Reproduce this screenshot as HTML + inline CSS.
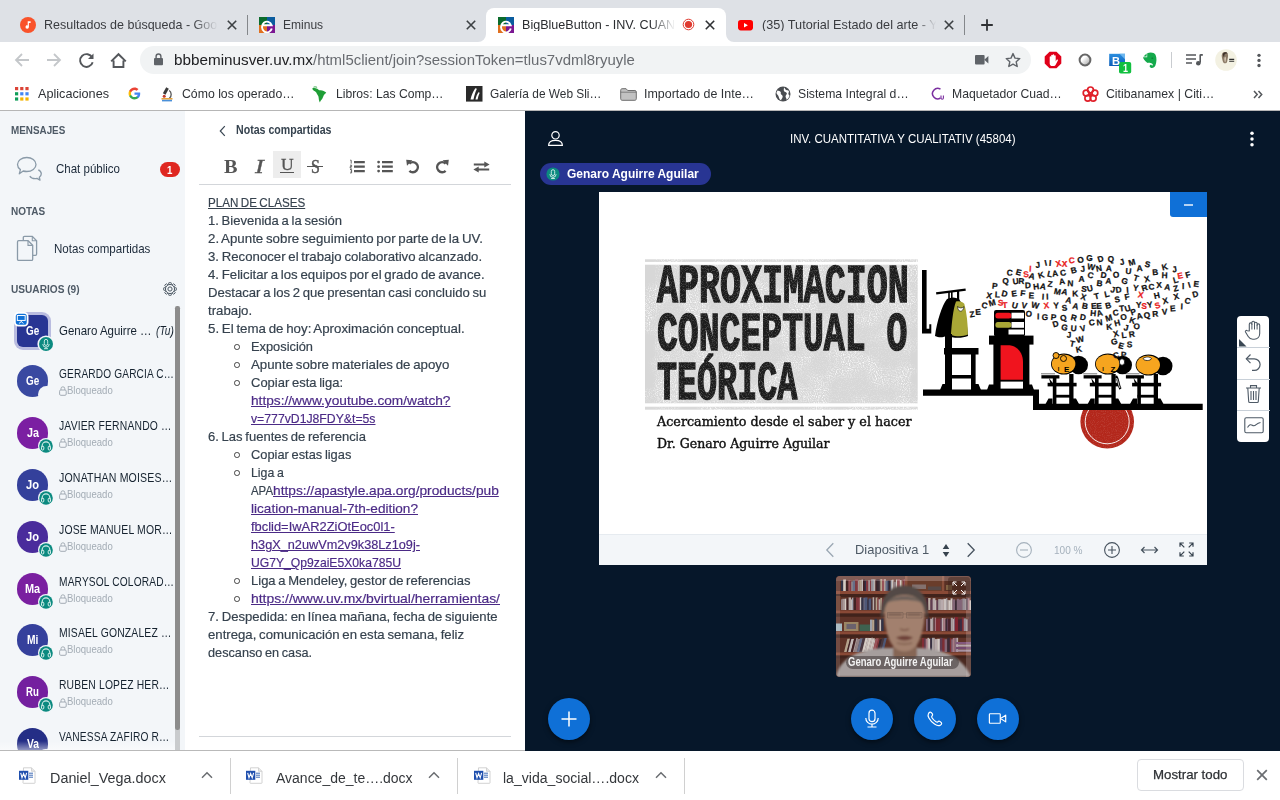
<!DOCTYPE html>
<html lang="es"><head><meta charset="utf-8"><title>BigBlueButton - INV. CUANTITATIVA Y CUALITATIV (45804)</title>
<style>
html,body{margin:0;padding:0}body{width:1280px;height:800px;overflow:hidden;position:relative;background:#fff;font-family:"Liberation Sans",sans-serif}
.a{position:absolute;display:block}
.t{position:absolute;white-space:pre;line-height:1;transform-origin:0 0;display:block}
</style></head>
<body>
<!-- browser chrome -->
<div class="a" style="left:0;top:0;width:1280px;height:42px;background:#dee1e6"></div>
<div class="a" style="left:486px;top:8px;width:240px;height:34px;background:#fff;border-radius:8px 8px 0 0"></div>
<svg class="a" style="left:478px;top:34px" width="8" height="8"><path d="M8 0V8H0A8 8 0 0 0 8 0Z" fill="#fff"/></svg>
<svg class="a" style="left:726px;top:34px" width="8" height="8"><path d="M0 0V8H8A8 8 0 0 1 0 0Z" fill="#fff"/></svg>
<svg class="a" style="left:20px;top:17px" width="16" height="16" viewBox="0 0 16 16"><circle cx="8" cy="8" r="8" fill="#f9532b"/><path d="M7.700 4.300h2.900v1.600H8.900v4.200a1.700 1.700 0 1 1-1.200-1.600z" fill="#fff"/></svg>
<span class="t" id="t0" style="left:44.30px;top:18.00px;font-size:13.20px;color:#3a3c40;transform:scaleX(0.9487);-webkit-mask-image:linear-gradient(90deg,#000 86%,transparent 100%);">Resultados de búsqueda - Goo</span>
<svg class="a" style="left:225.7px;top:18.6px" width="12" height="12" viewBox="-6 -6 12 12"><path d="M-4.2 -4.2L4.2 4.2M-4.2 4.2L4.2 -4.2" stroke="#3c4043" stroke-width="1.6" fill="none"/></svg>
<div class="a" style="left:247px;top:15px;width:1px;height:20px;background:#84878b"></div>
<svg class="a" style="left:258.8px;top:16.8px" width="16" height="16" viewBox="0 0 16 16"><rect x="0" y="0" width="8" height="8" fill="#0b6b2c"/><rect x="8" y="0" width="8" height="8" fill="#0b5c9e"/><rect x="0" y="8" width="8" height="8" fill="#e0701f"/><rect x="8" y="8" width="8" height="8" fill="#7b1792"/><path d="M12.800 11.600A5 5.400 0 1 1 12.700 8.200H3.400" fill="none" stroke="#fff" stroke-width="1.900"/></svg>
<span class="t" id="t1" style="left:283.20px;top:18.00px;font-size:13.20px;color:#3a3c40;transform:scaleX(0.9117);">Eminus</span>
<svg class="a" style="left:465.3px;top:18.6px" width="12" height="12" viewBox="-6 -6 12 12"><path d="M-4.2 -4.2L4.2 4.2M-4.2 4.2L4.2 -4.2" stroke="#3c4043" stroke-width="1.6" fill="none"/></svg>
<svg class="a" style="left:498.0px;top:16.8px" width="16" height="16" viewBox="0 0 16 16"><rect x="0" y="0" width="8" height="8" fill="#0b6b2c"/><rect x="8" y="0" width="8" height="8" fill="#0b5c9e"/><rect x="0" y="8" width="8" height="8" fill="#e0701f"/><rect x="8" y="8" width="8" height="8" fill="#7b1792"/><path d="M12.800 11.600A5 5.400 0 1 1 12.700 8.200H3.400" fill="none" stroke="#fff" stroke-width="1.900"/></svg>
<span class="t" id="t2" style="left:522.30px;top:18.00px;font-size:13.20px;color:#2b2d30;transform:scaleX(0.9528);-webkit-mask-image:linear-gradient(90deg,#000 84%,transparent 100%);">BigBlueButton - INV. CUAN</span>
<svg class="a" style="left:681.5px;top:18px" width="13" height="13" viewBox="-6.5 -6.5 13 13"><circle r="5.300" fill="none" stroke="#e03a2f" stroke-width="1"/><circle r="3.600" fill="#e03a2f"/></svg>
<svg class="a" style="left:704.3px;top:18.6px" width="12" height="12" viewBox="-6 -6 12 12"><path d="M-4.2 -4.2L4.2 4.2M-4.2 4.2L4.2 -4.2" stroke="#2f3134" stroke-width="1.6" fill="none"/></svg>
<svg class="a" style="left:737.5px;top:20px" width="15" height="11" viewBox="0 0 15 11"><rect width="15" height="10.4" rx="2.8" fill="#f00"/><path d="M6 2.9l3.9 2.3L6 7.5z" fill="#fff"/></svg>
<span class="t" id="t3" style="left:761.70px;top:18.00px;font-size:13.20px;color:#3a3c40;transform:scaleX(0.9606);-webkit-mask-image:linear-gradient(90deg,#000 88%,transparent 99%);">(35) Tutorial Estado del arte - Y</span>
<svg class="a" style="left:943.0px;top:18.6px" width="12" height="12" viewBox="-6 -6 12 12"><path d="M-4.2 -4.2L4.2 4.2M-4.2 4.2L4.2 -4.2" stroke="#3c4043" stroke-width="1.6" fill="none"/></svg>
<div class="a" style="left:964px;top:15px;width:1px;height:20px;background:#84878b"></div>
<svg class="a" style="left:980px;top:18px" width="14" height="14" viewBox="-7 -7 14 14"><path d="M-5.8 0H5.8M0 -5.8V5.8" stroke="#2f3134" stroke-width="1.8"/></svg>
<div class="a" style="left:0;top:42px;width:1280px;height:69px;background:#fff"></div>
<svg class="a" style="left:14px;top:52px" width="16" height="16" viewBox="0 0 16 16"><path d="M15 8H2M8 2L2 8l6 6" fill="none" stroke="#c4c7ca" stroke-width="1.8"/></svg>
<svg class="a" style="left:46px;top:52px" width="16" height="16" viewBox="0 0 16 16"><path d="M1 8h13M8 2l6 6-6 6" fill="none" stroke="#c4c7ca" stroke-width="1.8"/></svg>
<svg class="a" style="left:78px;top:52px" width="17" height="17" viewBox="0 0 16 16"><path d="M13.4 5.4A6 6 0 1 0 13.8 9.6" fill="none" stroke="#54575b" stroke-width="1.8"/><path d="M14.6 1.4v5.2H9.4z" fill="#54575b"/></svg>
<svg class="a" style="left:109.5px;top:51.5px" width="17" height="17" viewBox="0 0 17 17"><path d="M3.6 8.6V15h9.8V8.6M1.2 9.4L8.5 2.2l7.3 7.2" fill="none" stroke="#54575b" stroke-width="1.9"/></svg>
<div class="a" style="left:140px;top:46px;width:890.5px;height:28px;border-radius:14px;background:#f1f3f4"></div>
<svg class="a" style="left:153.5px;top:53px" width="9" height="13" viewBox="0 0 9 13"><rect x="0" y="5" width="9" height="7.3" rx="1" fill="#5f6368"/><path d="M2.1 5.4V3.4a2.4 2.4 0 0 1 4.8 0v2" fill="none" stroke="#5f6368" stroke-width="1.4"/></svg>
<span class="t" id="t4" style="left:174.00px;top:53.00px;font-size:14.60px;color:#202124;transform:scaleX(1.0455);">bbbeminusver.uv.mx</span>
<span class="t" id="t5" style="left:312.80px;top:53.00px;font-size:14.60px;color:#686b70;transform:scaleX(1.0241);">/html5client/join?sessionToken=tlus7vdml8ryuyle</span>
<svg class="a" style="left:974.5px;top:55px" width="14" height="10" viewBox="0 0 14 10"><rect width="9.6" height="9.4" rx="1" fill="#5f6368"/><path d="M9.2 4.7L13.4 1v7.6z" fill="#5f6368"/></svg>
<svg class="a" style="left:1005px;top:51.5px" width="16" height="16" viewBox="0 0 16 16"><path d="M8 1.6l2 4.5 4.8.5-3.6 3.2 1 4.7L8 12.1l-4.2 2.4 1-4.7L1.200 6.600l4.800-.5z" fill="none" stroke="#5f6368" stroke-width="1.4" stroke-linejoin="round"/></svg>
<svg class="a" style="left:1044px;top:51px" width="18" height="18" viewBox="-9 -9 18 18"><path d="M-3.500 -8.300h7L8.300 -3.500v7L3.500 8.300h-7L-8.300 3.500v-7z" fill="#e0001a"/><path d="M-3.300 1.200v-4.200a.75.750 0 0 1 1.500 0v-1.500a.75.750 0 0 1 1.500 0v-.5a.75.750 0 0 1 1.500 0v.9a.75.750 0 0 1 1.500 0V1.400l.9-1.700a.75.750 0 0 1 1.300.7L2.800 4.400c-.5 1.100-1.300 1.700-2.500 1.700h-.9c-1.500 0-2.700-1.200-2.700-2.700z" fill="#fff"/></svg>
<svg class="a" style="left:1077.300px;top:52px" width="16" height="16" viewBox="-8 -8 16 16"><defs><linearGradient id="gr1" x1="0" y1="0" x2="1" y2="1"><stop offset=".35" stop-color="#fff"/><stop offset="1" stop-color="#9a9a9a"/></linearGradient></defs><circle r="5.400" fill="url(#gr1)" stroke="#666" stroke-width="2"/></svg>
<svg class="a" style="left:1109px;top:51px" width="24" height="24" viewBox="0 0 24 24"><defs><linearGradient id="gr2" x1="0" y1="0" x2="0" y2="1"><stop offset="0" stop-color="#2c8fe0"/><stop offset="1" stop-color="#0b5cb8"/></linearGradient></defs><rect x=".2" y="2.800" width="15.800" height="12.200" fill="url(#gr2)"/><path d="M10.500 2.800H16v5.500z" fill="#6db6ee"/><rect x="10" y="11" width="12.200" height="11.600" rx="1.800" fill="#12c040"/></svg>
<span class="t" id="t6" style="left:1111.80px;top:56.00px;font-size:11.50px;color:#fff;font-weight:700;transform:scaleX(0.9624);">B</span>
<span class="t" id="t7" style="left:1122.80px;top:64.00px;font-size:10.20px;color:#fff;font-weight:700;transform:scaleX(0.8815);">1</span>
<svg class="a" style="left:1141.500px;top:51.500px" width="16" height="17" viewBox="0 0 16 17"><path d="M5.200 1.200C8.600 .1 12.200.5 13.500 2.800c1.400 2.900 1.200 7.600-.1 10.600-.7 1.600-2.200 2.700-3.900 2.500-1.700-.2-2.300-1.700-1.500-2.700.7-.8 2-.5 1.900.5.900-.1 1.200-1.100.6-1.800-1.300-1.600-4.300-.1-5.900-1.600C2.700 8.700 1.300 6.800 1 5.200h4.200z" fill="#14a94b"/><path d="M4.600 1.500v3H1.500z" fill="#14a94b"/><ellipse cx="10.300" cy="6.200" rx="1" ry=".6" fill="#0c7a35"/></svg>
<div class="a" style="left:1171px;top:52px;width:1px;height:16px;background:#c9ccd0"></div>
<svg class="a" style="left:1185px;top:52px" width="18" height="16" viewBox="0 0 18 16"><path d="M1 3h10M1 7h10M1 11h6" stroke="#54575b" stroke-width="1.700"/><path d="M15.200 2.500v8.300" stroke="#54575b" stroke-width="1.600"/><circle cx="13.300" cy="11.200" r="2.300" fill="#54575b"/><path d="M15.200 2h2.600v1.800h-2.600z" fill="#54575b"/></svg>
<svg class="a" style="left:1215px;top:49px" width="22" height="22" viewBox="-11 -11 22 22"><circle r="10.800" fill="#f3f1e2"/><path d="M-3.800 -6.500c1.600-2 4.800-1.800 5.600.4.700 2-.1 4-.3 5.800-.2 1.700-.5 3.300-2 3.600-1.500.2-2.400-.8-2.800-2.400-.5-2.300-1.700-5.500-.5-7.400z" fill="#8b7a66"/><path d="M-2.800 -6.800c1.500-1.300 3.700-1 4.300.3-1.300-.3-2.500.1-3 1-.5 1 .1 2.300-.2 3.400-.9-1.300-1.800-3.400-1.100-4.700z" fill="#3a2f28"/><path d="M-1.300 -3.500c.9.200 1.400 1 1.200 2.400-.2 1.500-.2 2.800-.9 3.600-.6-1.800-.9-4-.3-6z" fill="#d9cbb8"/><path d="M3.200 -0.600h5M3.200 1.200h5" stroke="#2b2b2b" stroke-width="1.100"/></svg>
<svg class="a" style="left:1255.500px;top:51px" width="6" height="18" viewBox="-3 -9 6 18"><circle cy="-4.700" r="1.650" fill="#54575b"/><circle cy=".4" r="1.650" fill="#54575b"/><circle cy="5.500" r="1.650" fill="#54575b"/></svg>
<svg class="a" style="left:14.5px;top:86.500px" width="14" height="14"><rect x="0.0" y="0.0" width="3.2" height="3.200" fill="#db4437"/><rect x="5.2" y="0.0" width="3.2" height="3.200" fill="#db4437"/><rect x="10.4" y="0.0" width="3.2" height="3.200" fill="#db4437"/><rect x="0.0" y="5.2" width="3.2" height="3.200" fill="#0f9d58"/><rect x="5.2" y="5.2" width="3.2" height="3.200" fill="#4285f4"/><rect x="10.4" y="5.2" width="3.2" height="3.200" fill="#4285f4"/><rect x="0.0" y="10.4" width="3.2" height="3.200" fill="#0f9d58"/><rect x="5.2" y="10.4" width="3.2" height="3.200" fill="#f4b400"/><rect x="10.4" y="10.4" width="3.2" height="3.200" fill="#f4b400"/></svg>
<span class="t" id="t8" style="left:38.30px;top:87.00px;font-size:13.10px;color:#2f3236;transform:scaleX(0.9658);">Aplicaciones</span>
<svg class="a" style="left:127.500px;top:87px" width="13" height="13" viewBox="0 0 48 48"><path fill="#4285f4" d="M45.100 24.500c0-1.600-.1-3.100-.4-4.500H24v8.500h11.800c-.5 2.800-2.100 5.100-4.400 6.700v5.500h7.100c4.200-3.800 6.600-9.500 6.600-16.200z"/><path fill="#34a853" d="M24 46c5.900 0 10.900-2 14.500-5.300l-7.100-5.500c-2 1.300-4.500 2.100-7.400 2.100-5.700 0-10.500-3.800-12.300-9H4.400v5.700C8 41.100 15.400 46 24 46z"/><path fill="#fbbc05" d="M11.700 28.300c-.4-1.300-.7-2.800-.7-4.300s.3-2.900.7-4.300V14H4.400C2.900 17 2 20.400 2 24s.9 7 2.400 10l7.300-5.700z"/><path fill="#ea4335" d="M24 10.700c3.200 0 6.100 1.100 8.400 3.300l6.300-6.300C34.900 4.200 29.900 2 24 2 15.400 2 8 6.900 4.400 14l7.300 5.700c1.800-5.200 6.600-9 12.300-9z"/></svg>
<svg class="a" style="left:159.500px;top:86px" width="14" height="16" viewBox="0 0 14 16"><path d="M6.200 1.200l2.600 1.500-3.300 6-2.600-1.500z" fill="#3b3b3b"/><path d="M9.200 4.500c2.400 1.600 2.800 5.600.2 7.800" fill="none" stroke="#555" stroke-width="1.300"/><path d="M1.500 12.800h11" stroke="#e8a33a" stroke-width="1.600"/><path d="M2 14.600h10" stroke="#4a90d9" stroke-width="1.600"/><circle cx="4.200" cy="10.300" r="1.500" fill="#c0392b"/></svg>
<span class="t" id="t9" style="left:182.00px;top:87.00px;font-size:13.10px;color:#2f3236;transform:scaleX(0.9368);">Cómo los operado…</span>
<svg class="a" style="left:311px;top:85.500px" width="17" height="17" viewBox="0 0 17 17"><path d="M1.200 2.500c1.500-.8 3.500-.5 5 .3.800.4 1.300 1.200 2.200 1.500 2.300-.6 5 .5 6.800 2.200-.6 1.200-1.800 1.600-2.400 2.800-.8 1.500-1 3.300-2.300 4.500-.9.800-1.300 1.700-1.600 2.700-1.200-1.700-1-3.800-1.400-5.700-.3-1.600-1.700-2.500-2.100-4-.3-1-1.300-1.400-2.100-1.800C2.400 4.600 1.500 3.700 1.200 2.500z" fill="#1f9e36"/><path d="M2.500 1.200c1.200-.5 2.600-.4 3.600.2" stroke="#1f9e36" stroke-width=".9" fill="none"/></svg>
<span class="t" id="t10" style="left:336.00px;top:87.00px;font-size:13.10px;color:#2f3236;transform:scaleX(0.9290);">Libros: Las Comp…</span>
<svg class="a" style="left:466px;top:86.400px" width="16.500" height="15.600" viewBox="0 0 16.500 15.600"><rect width="16.500" height="15.600" fill="#2a2a2a"/><path d="M4.500 13.500c1-4 2.300-7.600 4.800-11.200l1.600.5c-1.600 3.300-2.700 6.900-3.400 10.700zM9.500 13.500c.6-2.800 1.500-5 2.900-7.200l1.300.4c-1 2.200-1.700 4.400-2.100 6.800z" fill="#fff"/></svg>
<span class="t" id="t11" style="left:490.40px;top:87.00px;font-size:13.10px;color:#2f3236;transform:scaleX(0.9075);">Galería de Web Sli…</span>
<svg class="a" style="left:619.500px;top:87.500px" width="17" height="13" viewBox="0 0 17 13"><path d="M.7 2.200c0-.8.600-1.500 1.400-1.500h4l1.600 1.800h7.200c.8 0 1.400.600 1.400 1.400v6.900c0 .8-.6 1.500-1.400 1.500H2.100c-.8 0-1.400-.7-1.400-1.500z" fill="#c2c2c2" stroke="#6e6e6e" stroke-width="1"/><path d="M.7 4.200h15.600" stroke="#6e6e6e" stroke-width=".8"/></svg>
<span class="t" id="t12" style="left:644.00px;top:87.00px;font-size:13.10px;color:#2f3236;transform:scaleX(0.9505);">Importado de Inte…</span>
<svg class="a" style="left:774.500px;top:86px" width="16" height="16" viewBox="-8 -8 16 16"><circle r="7.500" fill="#4a4d51"/><path d="M-5.500 -3.500c1.200.6 2.200.4 3 1.300.9.900-.3 2 .7 2.700 1.100.8 1.900 1.600 1.300 3.100-.4 1-1.300 1.700-1.400 2.900-2.200-1-2-3.200-2.800-4.700-.6-1.200-2-1.800-1.800-3.300zM1 -6.500c1.400.8 1 2.100 2.200 2.600 1 .4 2-.2 2.600 1 .6 1.100-.8 1.900-.3 3.100.3.800 1 1 1.100 1.900C5.800 4 4.800 5.200 3.600 5.800c.2-1.800-1.400-2.300-1-3.900.3-1.300 1.600-1.500 1.200-2.700C3.400 -2 1.600 -1.800 1 -3c-.5-1 0-2.300 0-3.500z" fill="#fff"/></svg>
<span class="t" id="t13" style="left:798.30px;top:87.00px;font-size:13.10px;color:#2f3236;transform:scaleX(0.9323);">Sistema Integral d…</span>
<svg class="a" style="left:930px;top:86px" width="16" height="16" viewBox="0 0 16 16"><path d="M10.500 3.200A5.200 5.200 0 1 0 10.500 12" fill="none" stroke="#7b2fa0" stroke-width="1.500"/><path d="M11 9.500v2.600a1.200 1.200 0 0 0 2.400 0V9.500" fill="none" stroke="#7b2fa0" stroke-width="1.100"/></svg>
<span class="t" id="t14" style="left:952.30px;top:87.00px;font-size:13.10px;color:#2f3236;transform:scaleX(0.9303);">Maquetador Cuad…</span>
<svg class="a" style="left:1081.500px;top:85.500px" width="17" height="17" viewBox="-8.5 -8.500 17 17"><circle cx="-0.00" cy="-4.60" r="2.900" fill="none" stroke="#e0202a" stroke-width="1.700"/><circle cx="4.37" cy="-1.42" r="2.900" fill="none" stroke="#e0202a" stroke-width="1.700"/><circle cx="2.70" cy="3.72" r="2.900" fill="none" stroke="#e0202a" stroke-width="1.700"/><circle cx="-2.70" cy="3.72" r="2.900" fill="none" stroke="#e0202a" stroke-width="1.700"/><circle cx="-4.38" cy="-1.42" r="2.900" fill="none" stroke="#e0202a" stroke-width="1.700"/><circle r="1.600" fill="#e0202a"/></svg>
<span class="t" id="t15" style="left:1106.20px;top:87.00px;font-size:13.10px;color:#2f3236;transform:scaleX(0.9379);">Citibanamex | Citi…</span>
<svg class="a" style="left:1252.500px;top:89.500px" width="10" height="9" viewBox="0 0 10 9"><path d="M1 1l3.200 3.500L1 8M5.500 1l3.200 3.500L5.500 8" fill="none" stroke="#54575b" stroke-width="1.500"/></svg>
<div class="a" style="left:0;top:110px;width:1280px;height:1px;background:#b6b6b6"></div>
<!-- user list -->
<div class="a" style="left:0;top:111px;width:185px;height:640px;background:#f3f6f9"></div>
<span class="t" id="t16" style="left:11.00px;top:124.00px;font-size:11.60px;color:#4e5a66;font-weight:700;transform:scaleX(0.8511);">MENSAJES</span>
<svg class="a" style="left:16px;top:155px" width="28" height="27" viewBox="0 0 28 27"><path d="M10.800 2.500c5.100 0 9.200 3.100 9.200 7s-4.100 7-9.200 7c-1.300 0-2.500-.2-3.600-.5L3.300 18.800l1.100-4.200C2.600 13.300 1.500 11.500 1.500 9.500c0-3.900 4.200-7 9.300-7z" fill="none" stroke="#8a9aa8" stroke-width="1.300" stroke-linejoin="round"/><path d="M22.300 14.800c1.800.8 3 2.300 3 4 0 1.400-.8 2.600-2 3.400l.7 2.900-3-1.700c-.6.100-1.200.2-1.900.2-2.400 0-4.400-1-5.300-2.500" fill="none" stroke="#8a9aa8" stroke-width="1.300" stroke-linejoin="round"/></svg>
<span class="t" id="t17" style="left:56.30px;top:163.00px;font-size:12.80px;color:#1c2a3a;transform:scaleX(0.8996);">Chat público</span>
<div class="a" style="left:160px;top:162px;width:20px;height:15px;border-radius:7.500px;background:#df2721"></div>
<span class="t" id="t18" style="left:167.30px;top:165.00px;font-size:11.50px;color:#fff;font-weight:700;transform:scaleX(0.8429);">1</span>
<span class="t" id="t19" style="left:11.00px;top:205.00px;font-size:11.60px;color:#4e5a66;font-weight:700;transform:scaleX(0.8611);">NOTAS</span>
<svg class="a" style="left:16px;top:235px" width="23" height="27" viewBox="0 0 23 27"><path d="M7.300 5.700V2.600c0-.7.500-1.200 1.200-1.200h7.800l4.300 4.300v13.400c0 .7-.5 1.200-1.200 1.200h-2.600" fill="none" stroke="#8a9aa8" stroke-width="1.300"/><path d="M16.300 1.600v4.200h4.200" fill="none" stroke="#8a9aa8" stroke-width="1.100"/><path d="M2.700 5.700h9.400l4.600 4.600v13.900c0 .7-.5 1.200-1.200 1.200H2.700c-.7 0-1.200-.5-1.200-1.200V6.900c0-.7.500-1.200 1.200-1.200z" fill="#f3f6f9" stroke="#8a9aa8" stroke-width="1.300"/><path d="M12 5.900v4.500h4.500" fill="none" stroke="#8a9aa8" stroke-width="1.100"/></svg>
<span class="t" id="t20" style="left:53.80px;top:243.00px;font-size:12.80px;color:#1c2a3a;transform:scaleX(0.9036);">Notas compartidas</span>
<span class="t" id="t21" style="left:11.00px;top:283.00px;font-size:11.60px;color:#4e5a66;font-weight:700;transform:scaleX(0.8728);">USUARIOS (9)</span>
<svg class="a" style="left:162.900px;top:282px" width="14" height="14" viewBox="-8 -8 16 16"><rect x="-1.500" y="-7.300" width="3" height="2.600" rx=".6" transform="rotate(0)" fill="none" stroke="#46525e" stroke-width="1"/><rect x="-1.500" y="-7.300" width="3" height="2.600" rx=".6" transform="rotate(45)" fill="none" stroke="#46525e" stroke-width="1"/><rect x="-1.500" y="-7.300" width="3" height="2.600" rx=".6" transform="rotate(90)" fill="none" stroke="#46525e" stroke-width="1"/><rect x="-1.500" y="-7.300" width="3" height="2.600" rx=".6" transform="rotate(135)" fill="none" stroke="#46525e" stroke-width="1"/><rect x="-1.500" y="-7.300" width="3" height="2.600" rx=".6" transform="rotate(180)" fill="none" stroke="#46525e" stroke-width="1"/><rect x="-1.500" y="-7.300" width="3" height="2.600" rx=".6" transform="rotate(225)" fill="none" stroke="#46525e" stroke-width="1"/><rect x="-1.500" y="-7.300" width="3" height="2.600" rx=".6" transform="rotate(270)" fill="none" stroke="#46525e" stroke-width="1"/><rect x="-1.500" y="-7.300" width="3" height="2.600" rx=".6" transform="rotate(315)" fill="none" stroke="#46525e" stroke-width="1"/><circle r="5.200" fill="#f3f6f9" stroke="#46525e" stroke-width="1.100"/><circle r="2.400" fill="none" stroke="#46525e" stroke-width="1.100"/></svg>
<div class="a" style="left:14px;top:312.0px;width:37px;height:38px;border-radius:9px;background:#b9bce0"></div>
<div class="a" style="left:17px;top:315.0px;width:31px;height:32px;border-radius:6px;background:#283593"></div>
<span class="t" id="t22" style="left:26.00px;top:325.00px;font-size:12.00px;color:#fff;font-weight:700;transform:scaleX(0.8242);">Ge</span>
<svg class="a" style="left:14.400px;top:312.1px" width="14.500" height="14.500" viewBox="-.4 -.4 14.800 14.800"><rect x=".5" y=".5" width="13" height="13" rx="3.500" fill="#0f70d7" stroke="#fff" stroke-width="1.800"/><rect x="3" y="3.200" width="8" height="5" fill="none" stroke="#fff" stroke-width="1"/><path d="M7 8.300v1.300M4.700 11.300L7 9.500l2.300 1.800" fill="none" stroke="#fff" stroke-width=".9"/></svg>
<svg class="a" style="left:37px;top:334.5px" width="18" height="18" viewBox="-9 -9 18 18"><circle r="8.600" fill="#f3f6f9"/><circle r="7" fill="#0b8a80"/><rect x="-1.700" y="-4.600" width="3.400" height="6" rx="1.700" fill="none" stroke="#d8f0ec" stroke-width=".9"/><path d="M-3.200 0a3.200 3.200 0 0 0 6.400 0M0 3.200v1.300M-2 4.700h4" fill="none" stroke="#d8f0ec" stroke-width=".9"/></svg>
<span class="t" id="t23" style="left:59.20px;top:325.00px;font-size:12.80px;color:#15222f;transform:scaleX(0.8978);">Genaro Aguirre …</span>
<span class="t" id="t24" style="left:156.30px;top:325.00px;font-size:12.20px;color:#15222f;font-style:italic;transform:scaleX(0.8350);">(Tu)</span>
<div class="a" style="left:16.800px;top:365.0px;width:31.400px;height:32px;border-radius:16px;background:#3949a1"></div>
<span class="t" id="t25" style="left:25.90px;top:375.00px;font-size:12.00px;color:#fff;font-weight:700;transform:scaleX(0.8242);">Ge</span>
<div class="a" style="left:38px;top:386.0px;width:17px;height:17px;border-radius:9px;background:#f3f6f9"></div>
<span class="t" id="t26" style="left:59.20px;top:368.00px;font-size:12.40px;color:#15222f;letter-spacing:0.20px;transform:scaleX(0.8157);">GERARDO GARCIA C…</span>
<svg class="a" style="left:59.0px;top:386.3px" width="8" height="10" viewBox="0 0 8 10"><rect x=".6" y="4" width="6.600" height="5.300" rx="1.200" fill="none" stroke="#a3acb5" stroke-width="1"/><path d="M2 4V2.700a1.900 1.900 0 0 1 3.800 0V4" fill="none" stroke="#a3acb5" stroke-width="1"/></svg>
<span class="t" id="t27" style="left:67.30px;top:385.00px;font-size:10.80px;color:#a3acb5;transform:scaleX(0.8850);">Bloqueado</span>
<div class="a" style="left:16.800px;top:417.0px;width:31.400px;height:32px;border-radius:16px;background:#7b1fa2"></div>
<span class="t" id="t28" style="left:26.50px;top:427.00px;font-size:12.00px;color:#fff;font-weight:700;transform:scaleX(0.8982);">Ja</span>
<svg class="a" style="left:37.4px;top:437.0px" width="18" height="18" viewBox="-9 -9 18 18"><circle r="8" fill="#f3f6f9"/><circle r="6.800" fill="#0b8a80"/><path d="M-3.900 1.200v-1.400a3.900 3.900 0 0 1 7.800 0v1.400" fill="none" stroke="#d8f0ec" stroke-width="1.100"/><rect x="-4.500" y="0.200" width="2.300" height="3.800" rx="1" fill="none" stroke="#d8f0ec" stroke-width="1"/><rect x="2.200" y="0.200" width="2.300" height="3.800" rx="1" fill="none" stroke="#d8f0ec" stroke-width="1"/></svg>
<span class="t" id="t29" style="left:59.20px;top:420.00px;font-size:12.40px;color:#15222f;letter-spacing:0.20px;transform:scaleX(0.8361);">JAVIER FERNANDO …</span>
<svg class="a" style="left:59.0px;top:438.3px" width="8" height="10" viewBox="0 0 8 10"><rect x=".6" y="4" width="6.600" height="5.300" rx="1.200" fill="none" stroke="#a3acb5" stroke-width="1"/><path d="M2 4V2.700a1.900 1.900 0 0 1 3.800 0V4" fill="none" stroke="#a3acb5" stroke-width="1"/></svg>
<span class="t" id="t30" style="left:67.30px;top:437.00px;font-size:10.80px;color:#a3acb5;transform:scaleX(0.8850);">Bloqueado</span>
<div class="a" style="left:16.800px;top:469.0px;width:31.400px;height:32px;border-radius:16px;background:#34409b"></div>
<span class="t" id="t31" style="left:26.00px;top:479.00px;font-size:12.00px;color:#fff;font-weight:700;transform:scaleX(0.9275);">Jo</span>
<svg class="a" style="left:37.4px;top:489.0px" width="18" height="18" viewBox="-9 -9 18 18"><circle r="8" fill="#f3f6f9"/><circle r="6.800" fill="#0b8a80"/><path d="M-3.900 1.200v-1.400a3.900 3.900 0 0 1 7.800 0v1.400" fill="none" stroke="#d8f0ec" stroke-width="1.100"/><rect x="-4.500" y="0.200" width="2.300" height="3.800" rx="1" fill="none" stroke="#d8f0ec" stroke-width="1"/><rect x="2.200" y="0.200" width="2.300" height="3.800" rx="1" fill="none" stroke="#d8f0ec" stroke-width="1"/></svg>
<span class="t" id="t32" style="left:59.20px;top:472.00px;font-size:12.40px;color:#15222f;letter-spacing:0.20px;transform:scaleX(0.8528);">JONATHAN MOISES…</span>
<svg class="a" style="left:59.0px;top:490.3px" width="8" height="10" viewBox="0 0 8 10"><rect x=".6" y="4" width="6.600" height="5.300" rx="1.200" fill="none" stroke="#a3acb5" stroke-width="1"/><path d="M2 4V2.700a1.900 1.900 0 0 1 3.800 0V4" fill="none" stroke="#a3acb5" stroke-width="1"/></svg>
<span class="t" id="t33" style="left:67.30px;top:489.00px;font-size:10.80px;color:#a3acb5;transform:scaleX(0.8850);">Bloqueado</span>
<div class="a" style="left:16.800px;top:521.0px;width:31.400px;height:32px;border-radius:16px;background:#4a2c9c"></div>
<span class="t" id="t34" style="left:26.00px;top:531.00px;font-size:12.00px;color:#fff;font-weight:700;transform:scaleX(0.9275);">Jo</span>
<svg class="a" style="left:37.4px;top:541.0px" width="18" height="18" viewBox="-9 -9 18 18"><circle r="8" fill="#f3f6f9"/><circle r="6.800" fill="#0b8a80"/><path d="M-3.900 1.200v-1.400a3.900 3.900 0 0 1 7.800 0v1.400" fill="none" stroke="#d8f0ec" stroke-width="1.100"/><rect x="-4.500" y="0.200" width="2.300" height="3.800" rx="1" fill="none" stroke="#d8f0ec" stroke-width="1"/><rect x="2.200" y="0.200" width="2.300" height="3.800" rx="1" fill="none" stroke="#d8f0ec" stroke-width="1"/></svg>
<span class="t" id="t35" style="left:59.20px;top:524.00px;font-size:12.40px;color:#15222f;letter-spacing:0.20px;transform:scaleX(0.8411);">JOSE MANUEL MOR…</span>
<svg class="a" style="left:59.0px;top:542.3px" width="8" height="10" viewBox="0 0 8 10"><rect x=".6" y="4" width="6.600" height="5.300" rx="1.200" fill="none" stroke="#a3acb5" stroke-width="1"/><path d="M2 4V2.700a1.900 1.900 0 0 1 3.800 0V4" fill="none" stroke="#a3acb5" stroke-width="1"/></svg>
<span class="t" id="t36" style="left:67.30px;top:541.00px;font-size:10.80px;color:#a3acb5;transform:scaleX(0.8850);">Bloqueado</span>
<div class="a" style="left:16.800px;top:573.0px;width:31.400px;height:32px;border-radius:16px;background:#7a1fa0"></div>
<span class="t" id="t37" style="left:24.90px;top:583.00px;font-size:12.00px;color:#fff;font-weight:700;transform:scaleX(0.9117);">Ma</span>
<svg class="a" style="left:37.4px;top:593.0px" width="18" height="18" viewBox="-9 -9 18 18"><circle r="8" fill="#f3f6f9"/><circle r="6.800" fill="#0b8a80"/><path d="M-3.900 1.200v-1.400a3.900 3.900 0 0 1 7.800 0v1.400" fill="none" stroke="#d8f0ec" stroke-width="1.100"/><rect x="-4.500" y="0.200" width="2.300" height="3.800" rx="1" fill="none" stroke="#d8f0ec" stroke-width="1"/><rect x="2.200" y="0.200" width="2.300" height="3.800" rx="1" fill="none" stroke="#d8f0ec" stroke-width="1"/></svg>
<span class="t" id="t38" style="left:59.20px;top:576.00px;font-size:12.40px;color:#15222f;letter-spacing:0.20px;transform:scaleX(0.8201);">MARYSOL COLORAD…</span>
<svg class="a" style="left:59.0px;top:594.3px" width="8" height="10" viewBox="0 0 8 10"><rect x=".6" y="4" width="6.600" height="5.300" rx="1.200" fill="none" stroke="#a3acb5" stroke-width="1"/><path d="M2 4V2.700a1.900 1.900 0 0 1 3.800 0V4" fill="none" stroke="#a3acb5" stroke-width="1"/></svg>
<span class="t" id="t39" style="left:67.30px;top:593.00px;font-size:10.80px;color:#a3acb5;transform:scaleX(0.8850);">Bloqueado</span>
<div class="a" style="left:16.800px;top:624.2px;width:31.400px;height:32px;border-radius:16px;background:#35409c"></div>
<span class="t" id="t40" style="left:26.80px;top:634.00px;font-size:12.00px;color:#fff;font-weight:700;transform:scaleX(0.8543);">Mi</span>
<svg class="a" style="left:37.4px;top:644.2px" width="18" height="18" viewBox="-9 -9 18 18"><circle r="8" fill="#f3f6f9"/><circle r="6.800" fill="#0b8a80"/><path d="M-3.900 1.200v-1.400a3.900 3.900 0 0 1 7.800 0v1.400" fill="none" stroke="#d8f0ec" stroke-width="1.100"/><rect x="-4.500" y="0.200" width="2.300" height="3.800" rx="1" fill="none" stroke="#d8f0ec" stroke-width="1"/><rect x="2.200" y="0.200" width="2.300" height="3.800" rx="1" fill="none" stroke="#d8f0ec" stroke-width="1"/></svg>
<span class="t" id="t41" style="left:59.20px;top:627.00px;font-size:12.40px;color:#15222f;letter-spacing:0.20px;transform:scaleX(0.8367);">MISAEL GONZALEZ …</span>
<svg class="a" style="left:59.0px;top:645.5px" width="8" height="10" viewBox="0 0 8 10"><rect x=".6" y="4" width="6.600" height="5.300" rx="1.200" fill="none" stroke="#a3acb5" stroke-width="1"/><path d="M2 4V2.700a1.900 1.900 0 0 1 3.800 0V4" fill="none" stroke="#a3acb5" stroke-width="1"/></svg>
<span class="t" id="t42" style="left:67.30px;top:644.00px;font-size:10.80px;color:#a3acb5;transform:scaleX(0.8850);">Bloqueado</span>
<div class="a" style="left:16.800px;top:676.2px;width:31.400px;height:32px;border-radius:16px;background:#74209f"></div>
<span class="t" id="t43" style="left:26.10px;top:686.00px;font-size:12.00px;color:#fff;font-weight:700;transform:scaleX(0.8000);">Ru</span>
<svg class="a" style="left:37.4px;top:696.2px" width="18" height="18" viewBox="-9 -9 18 18"><circle r="8" fill="#f3f6f9"/><circle r="6.800" fill="#0b8a80"/><path d="M-3.900 1.200v-1.400a3.900 3.900 0 0 1 7.800 0v1.400" fill="none" stroke="#d8f0ec" stroke-width="1.100"/><rect x="-4.500" y="0.200" width="2.300" height="3.800" rx="1" fill="none" stroke="#d8f0ec" stroke-width="1"/><rect x="2.200" y="0.200" width="2.300" height="3.800" rx="1" fill="none" stroke="#d8f0ec" stroke-width="1"/></svg>
<span class="t" id="t44" style="left:59.20px;top:679.00px;font-size:12.40px;color:#15222f;letter-spacing:0.20px;transform:scaleX(0.8331);">RUBEN LOPEZ HER…</span>
<svg class="a" style="left:59.0px;top:697.5px" width="8" height="10" viewBox="0 0 8 10"><rect x=".6" y="4" width="6.600" height="5.300" rx="1.200" fill="none" stroke="#a3acb5" stroke-width="1"/><path d="M2 4V2.700a1.900 1.900 0 0 1 3.800 0V4" fill="none" stroke="#a3acb5" stroke-width="1"/></svg>
<span class="t" id="t45" style="left:67.30px;top:696.00px;font-size:10.80px;color:#a3acb5;transform:scaleX(0.8850);">Bloqueado</span>
<div class="a" style="left:16.800px;top:728.2px;width:31.400px;height:32px;border-radius:16px;background:#242e86"></div>
<span class="t" id="t46" style="left:26.50px;top:738.00px;font-size:12.00px;color:#fff;font-weight:700;transform:scaleX(0.8562);">Va</span>
<svg class="a" style="left:37.4px;top:748.2px" width="18" height="18" viewBox="-9 -9 18 18"><circle r="8" fill="#f3f6f9"/><circle r="6.800" fill="#0b8a80"/><path d="M-3.900 1.200v-1.400a3.900 3.900 0 0 1 7.800 0v1.400" fill="none" stroke="#d8f0ec" stroke-width="1.100"/><rect x="-4.500" y="0.200" width="2.300" height="3.800" rx="1" fill="none" stroke="#d8f0ec" stroke-width="1"/><rect x="2.200" y="0.200" width="2.300" height="3.800" rx="1" fill="none" stroke="#d8f0ec" stroke-width="1"/></svg>
<span class="t" id="t47" style="left:59.20px;top:731.00px;font-size:12.40px;color:#15222f;letter-spacing:0.20px;transform:scaleX(0.8247);">VANESSA ZAFIRO R…</span>
<svg class="a" style="left:59.0px;top:749.5px" width="8" height="10" viewBox="0 0 8 10"><rect x=".6" y="4" width="6.600" height="5.300" rx="1.200" fill="none" stroke="#a3acb5" stroke-width="1"/><path d="M2 4V2.700a1.900 1.900 0 0 1 3.800 0V4" fill="none" stroke="#a3acb5" stroke-width="1"/></svg>
<div class="a" style="left:175.300px;top:306px;width:4.600px;height:445px;background:#c9cbcd;border-radius:2.300px 2.300px 0 0"></div>
<div class="a" style="left:175.300px;top:306px;width:4.600px;height:424px;background:#8c8c8c;border-radius:2.300px"></div>
<div class="a" style="left:0;top:741px;width:175px;height:10px;background:linear-gradient(180deg,rgba(243,246,249,0),rgba(255,255,255,.55))"></div>
<!-- shared notes -->
<div class="a" style="left:185px;top:111px;width:340px;height:640px;background:#fff"></div>
<svg class="a" style="left:218px;top:125px" width="9" height="12" viewBox="0 0 9 12"><path d="M6.800 1.200L2.300 6l4.500 4.800" fill="none" stroke="#3a4753" stroke-width="1.200"/></svg>
<span class="t" id="t48" style="left:235.50px;top:124.00px;font-size:12.40px;color:#36434f;font-weight:700;transform:scaleX(0.8561);">Notas compartidas</span>
<div class="a" style="left:273px;top:151px;width:28px;height:27px;background:#ededed"></div>
<span class="t" id="t49" style="left:223.80px;top:157.00px;font-size:19.50px;color:#555;font-weight:700;font-family:'Liberation Serif', serif;transform:scaleX(1.0372);">B</span>
<span class="t" id="t50" style="left:254.50px;top:157.00px;font-size:19.50px;color:#555;font-style:italic;font-family:'Liberation Serif', serif;transform:scaleX(1.3538);-webkit-text-stroke:.3px #555;">I</span>
<span class="t" id="t51" style="left:280.80px;top:157.00px;font-size:16.20px;color:#555;font-family:'Liberation Serif', serif;transform:scaleX(1.0852);-webkit-text-stroke:.3px #555;">U</span>
<div class="a" style="left:280.200px;top:171.700px;width:13.800px;height:1.300px;background:#555"></div>
<span class="t" id="t52" style="left:310.60px;top:157.00px;font-size:19.50px;color:#555;font-family:'Liberation Serif', serif;transform:scaleX(0.8196);-webkit-text-stroke:.5px #555;">S</span>
<div class="a" style="left:307.300px;top:166.100px;width:15.500px;height:1.300px;background:#555"></div>
<svg class="a" style="left:348px;top:158px" width="18" height="17" viewBox="0 0 18 17"><path d="M6 4.100h10.800M6 8.700h10.800M6 13.100h10.800" stroke="#555" stroke-width="2.200"/><path d="M2.200 2.200h1v3.400M2 7.200h1.600v1.400H2.200v1.500h1.600M2 11.500h1.600v3.400H2M2.600 13.200h1" fill="none" stroke="#555" stroke-width=".9"/></svg>
<svg class="a" style="left:376px;top:158px" width="18" height="17" viewBox="0 0 18 17"><path d="M6 4.100h10.800M6 8.700h10.800M6 13.100h10.800" stroke="#555" stroke-width="2.200"/><circle cx="2.600" cy="4.100" r="1.400" fill="#555"/><circle cx="2.600" cy="8.700" r="1.400" fill="#555"/><circle cx="2.600" cy="13.100" r="1.400" fill="#555"/></svg>
<svg class="a" style="left:405px;top:158px" width="17" height="17" viewBox="0 0 17 17"><path d="M4.300 5.600A5 5 0 1 1 4.400 12.800" fill="none" stroke="#555" stroke-width="2.500"/><path d="M1.200 1.800l6.200.5-5.400 5.500z" fill="#555"/></svg>
<svg class="a" style="left:433px;top:158px" width="17" height="17" viewBox="0 0 17 17"><path d="M12.700 5.600A5 5 0 1 0 12.600 12.800" fill="none" stroke="#555" stroke-width="2.500"/><path d="M15.800 1.800l-6.200.5 5.400 5.500z" fill="#555"/></svg>
<svg class="a" style="left:471.500px;top:158px" width="19" height="17" viewBox="0 0 19 17"><path d="M1.800 6.500h11.500M5.500 11.500h11.700" stroke="#555" stroke-width="2.100"/><path d="M12.300 3.600l5.300 2.900-5.300 2.900zM6.700 8.600l-5.300 2.900 5.300 2.900z" fill="#555"/></svg>
<div class="a" style="left:199px;top:184px;width:312px;height:1px;background:#d3d6da"></div>
<div class="a" style="left:199px;top:735.500px;width:312px;height:1px;background:#d3d6da"></div>
<span class="t" id="t53" style="left:208.40px;top:197.00px;font-size:12.70px;color:#36424e;text-decoration:underline;transform:scaleX(0.9162);word-spacing:-.9px;-webkit-text-stroke:.18px currentColor;">PLAN DE CLASES</span>
<span class="t" id="t54" style="left:208.40px;top:215.00px;font-size:12.70px;color:#36424e;transform:scaleX(1.0282);word-spacing:-.9px;-webkit-text-stroke:.18px currentColor;">1. Bievenida a la sesión</span>
<span class="t" id="t55" style="left:208.40px;top:233.00px;font-size:12.70px;color:#36424e;transform:scaleX(1.0473);word-spacing:-.9px;-webkit-text-stroke:.18px currentColor;">2. Apunte sobre seguimiento por parte de la UV.</span>
<span class="t" id="t56" style="left:208.40px;top:251.00px;font-size:12.70px;color:#36424e;transform:scaleX(1.0402);word-spacing:-.9px;-webkit-text-stroke:.18px currentColor;">3. Reconocer el trabajo colaborativo alcanzado.</span>
<span class="t" id="t57" style="left:208.40px;top:269.00px;font-size:12.70px;color:#36424e;transform:scaleX(1.0416);word-spacing:-.9px;-webkit-text-stroke:.18px currentColor;">4. Felicitar a los equipos por el grado de avance.</span>
<span class="t" id="t58" style="left:208.40px;top:287.00px;font-size:12.70px;color:#36424e;transform:scaleX(1.0339);word-spacing:-.9px;-webkit-text-stroke:.18px currentColor;">Destacar a los 2 que presentan casi concluido su</span>
<span class="t" id="t59" style="left:208.40px;top:305.00px;font-size:12.70px;color:#36424e;transform:scaleX(1.0419);word-spacing:-.9px;-webkit-text-stroke:.18px currentColor;">trabajo.</span>
<span class="t" id="t60" style="left:208.40px;top:323.00px;font-size:12.70px;color:#36424e;transform:scaleX(1.0475);word-spacing:-.9px;-webkit-text-stroke:.18px currentColor;">5. El tema de hoy: Aproximación conceptual.</span>
<span class="t" id="t61" style="left:250.50px;top:341.00px;font-size:12.70px;color:#36424e;transform:scaleX(1.0104);word-spacing:-.9px;-webkit-text-stroke:.18px currentColor;">Exposición</span>
<div class="a" style="left:234px;top:344.3px;width:3.600px;height:3.600px;border:1px solid #444;border-radius:50%"></div>
<span class="t" id="t62" style="left:250.50px;top:359.00px;font-size:12.70px;color:#36424e;transform:scaleX(1.0456);word-spacing:-.9px;-webkit-text-stroke:.18px currentColor;">Apunte sobre materiales de apoyo</span>
<div class="a" style="left:234px;top:362.3px;width:3.600px;height:3.600px;border:1px solid #444;border-radius:50%"></div>
<span class="t" id="t63" style="left:250.50px;top:377.00px;font-size:12.70px;color:#36424e;transform:scaleX(1.0235);word-spacing:-.9px;-webkit-text-stroke:.18px currentColor;">Copiar esta liga:</span>
<div class="a" style="left:234px;top:380.3px;width:3.600px;height:3.600px;border:1px solid #444;border-radius:50%"></div>
<span class="t" id="t64" style="left:250.50px;top:395.00px;font-size:12.70px;color:#4b2a86;text-decoration:underline;transform:scaleX(1.0797);word-spacing:-.9px;-webkit-text-stroke:.18px currentColor;">https://www.youtube.com/watch?</span>
<span class="t" id="t65" style="left:250.50px;top:413.00px;font-size:12.70px;color:#4b2a86;text-decoration:underline;transform:scaleX(0.9646);word-spacing:-.9px;-webkit-text-stroke:.18px currentColor;">v=777vD1J8FDY&amp;t=5s</span>
<span class="t" id="t66" style="left:208.40px;top:431.00px;font-size:12.70px;color:#36424e;transform:scaleX(1.0274);word-spacing:-.9px;-webkit-text-stroke:.18px currentColor;">6. Las fuentes de referencia</span>
<span class="t" id="t67" style="left:250.50px;top:449.00px;font-size:12.70px;color:#36424e;transform:scaleX(1.0127);word-spacing:-.9px;-webkit-text-stroke:.18px currentColor;">Copiar estas ligas</span>
<div class="a" style="left:234px;top:452.3px;width:3.600px;height:3.600px;border:1px solid #444;border-radius:50%"></div>
<span class="t" id="t68" style="left:250.50px;top:467.00px;font-size:12.70px;color:#36424e;transform:scaleX(0.9741);word-spacing:-.9px;-webkit-text-stroke:.18px currentColor;">Liga a</span>
<div class="a" style="left:234px;top:470.3px;width:3.600px;height:3.600px;border:1px solid #444;border-radius:50%"></div>
<span class="t" id="t69" style="left:250.50px;top:485.00px;font-size:12.70px;color:#36424e;transform:scaleX(0.8997);word-spacing:-.9px;-webkit-text-stroke:.18px currentColor;">APA</span>
<span class="t" id="t70" style="left:272.50px;top:485.00px;font-size:12.70px;color:#4b2a86;text-decoration:underline;transform:scaleX(1.0815);word-spacing:-.9px;-webkit-text-stroke:.18px currentColor;">https://apastyle.apa.org/products/pub</span>
<span class="t" id="t71" style="left:250.50px;top:503.00px;font-size:12.70px;color:#4b2a86;text-decoration:underline;transform:scaleX(1.0714);word-spacing:-.9px;-webkit-text-stroke:.18px currentColor;">lication-manual-7th-edition?</span>
<span class="t" id="t72" style="left:250.50px;top:521.00px;font-size:12.70px;color:#4b2a86;text-decoration:underline;transform:scaleX(1.0170);word-spacing:-.9px;-webkit-text-stroke:.18px currentColor;">fbclid=IwAR2ZiOtEoc0l1-</span>
<span class="t" id="t73" style="left:250.50px;top:539.00px;font-size:12.70px;color:#4b2a86;text-decoration:underline;transform:scaleX(1.0025);word-spacing:-.9px;-webkit-text-stroke:.18px currentColor;">h3gX_n2uwVm2v9k38Lz1o9j-</span>
<span class="t" id="t74" style="left:250.50px;top:557.00px;font-size:12.70px;color:#4b2a86;text-decoration:underline;transform:scaleX(0.9580);word-spacing:-.9px;-webkit-text-stroke:.18px currentColor;">UG7Y_Qp9zaiE5X0ka785U</span>
<span class="t" id="t75" style="left:250.50px;top:575.00px;font-size:12.70px;color:#36424e;transform:scaleX(1.0262);word-spacing:-.9px;-webkit-text-stroke:.18px currentColor;">Liga a Mendeley, gestor de referencias</span>
<div class="a" style="left:234px;top:578.3px;width:3.600px;height:3.600px;border:1px solid #444;border-radius:50%"></div>
<span class="t" id="t76" style="left:250.50px;top:593.00px;font-size:12.70px;color:#4b2a86;text-decoration:underline;transform:scaleX(1.0978);word-spacing:-.9px;-webkit-text-stroke:.18px currentColor;">https://www.uv.mx/bvirtual/herramientas/</span>
<div class="a" style="left:234px;top:596.3px;width:3.600px;height:3.600px;border:1px solid #444;border-radius:50%"></div>
<span class="t" id="t77" style="left:208.40px;top:611.00px;font-size:12.70px;color:#36424e;transform:scaleX(1.0339);word-spacing:-.9px;-webkit-text-stroke:.18px currentColor;">7. Despedida: en línea mañana, fecha de siguiente</span>
<span class="t" id="t78" style="left:208.40px;top:629.00px;font-size:12.70px;color:#36424e;transform:scaleX(1.0386);word-spacing:-.9px;-webkit-text-stroke:.18px currentColor;">entrega, comunicación en esta semana, feliz</span>
<span class="t" id="t79" style="left:208.40px;top:647.00px;font-size:12.70px;color:#36424e;transform:scaleX(1.0010);word-spacing:-.9px;-webkit-text-stroke:.18px currentColor;">descanso en casa.</span>
<!-- presentation -->
<div class="a" style="left:525px;top:111px;width:755px;height:640px;background:#06172a"></div>
<svg class="a" style="left:546.500px;top:130px" width="17" height="17" viewBox="0 0 17 17"><circle cx="8.500" cy="5.300" r="3.700" fill="none" stroke="#fff" stroke-width="1.200"/><path d="M1.600 15.400c0-3.300 2.700-5 6.900-5s6.900 1.700 6.900 5z" fill="none" stroke="#fff" stroke-width="1.200" stroke-linejoin="round"/></svg>
<span class="t" id="t80" style="left:790.30px;top:133.00px;font-size:12.70px;color:#fff;transform:scaleX(0.9060);">INV. CUANTITATIVA Y CUALITATIV (45804)</span>
<svg class="a" style="left:1248.500px;top:130px" width="6" height="18" viewBox="-3 -9 6 18"><circle cy="-5.700" r="1.750" fill="#fff"/><circle r="1.750" fill="#fff"/><circle cy="5.700" r="1.750" fill="#fff"/></svg>
<div class="a" style="left:540px;top:163px;width:171px;height:22px;border-radius:11px;background:#283593"></div>
<svg class="a" style="left:546px;top:167px" width="14" height="14" viewBox="-7 -7 14 14"><circle r="6.600" fill="#0b8a80"/><rect x="-1.700" y="-4.300" width="3.400" height="5.800" rx="1.700" fill="none" stroke="#d8f0ec" stroke-width=".9"/><path d="M-3.100 .2a3.100 3.100 0 0 0 6.200 0M0 3.300v1.100M-1.900 4.500h3.800" fill="none" stroke="#d8f0ec" stroke-width=".9"/></svg>
<span class="t" id="t81" style="left:567.00px;top:167.00px;font-size:13.40px;color:#fff;font-weight:700;transform:scaleX(0.8961);">Genaro Aguirre Aguilar</span>
<div class="a" style="left:599px;top:192px;width:608px;height:373px;background:#fff"></div>
<svg class="a" style="left:599px;top:192px" width="608" height="342" viewBox="599 192 608 342">
<defs><filter id="nz" x="0" y="0" width="100%" height="100%"><feTurbulence type="fractalNoise" baseFrequency="0.85" numOctaves="1" seed="3" result="f"/><feColorMatrix in="f" type="matrix" values="0 0 0 0 1  0 0 0 0 1  0 0 0 0 1  3.200 0 0 0 -1.450" result="fa"/><feTurbulence type="fractalNoise" baseFrequency="0.035" numOctaves="2" seed="9" result="c"/><feColorMatrix in="c" type="matrix" values="0 0 0 0 1  0 0 0 0 1  0 0 0 0 1  0 5 0 0 -2" result="ca"/><feComposite in="fa" in2="ca" operator="in" result="sp"/><feComposite in="sp" in2="SourceGraphic" operator="in"/></filter><filter id="nz2" x="0" y="0" width="100%" height="100%"><feTurbulence type="fractalNoise" baseFrequency="0.9" numOctaves="2" seed="5"/><feColorMatrix type="matrix" values="0 0 0 0 1  0 0 0 0 1  0 0 0 0 1  0 0 0 1.600 -0.750"/><feComposite in2="SourceGraphic" operator="in"/></filter><clipPath id="rc"><rect x="1070" y="410" width="80" height="50"/></clipPath></defs>
<rect x="645" y="259.300" width="272.700" height="2.600" fill="#d9d9d9"/>
<rect x="645" y="264.700" width="272.700" height="138.600" fill="#d7d7d7"/>
<rect x="645" y="406.700" width="272.700" height="3" fill="#d9d9d9"/>
<rect x="645" y="259" width="272.700" height="151" fill="#fff" filter="url(#nz)" opacity=".9"/>
<g fill="#000">
<path d="M922 270h4.600v58.800h2.700v-4.500h2v9.300H922z"/>
<path d="M936 292.300l29.500-3.800.3 2.200-29.500 3.800z"/><rect x="948.200" y="292" width="1.600" height="9"/><rect x="951" y="291.500" width="1.600" height="9"/><rect x="957" y="290.500" width="2.200" height="11"/>
<path d="M947 299c-5 6-10 22-12 37 4 2 9 1.500 12-.5 6 3 15 3 21 .5-1-14-4-30-9-37-4-2-8-2-12 0z"/>
<path d="M956 301.500c3.500-.8 6.500 0 8.300 2.200 2.400 9 3.600 20 3.600 30.800-5 2.300-12 2.200-17 .2 1-12 2-25 5.100-33.200z" fill="#a9a736"/>
<path d="M957.500 306.500c2 1.800 4.500 2 6.500.2-.3 3-2 4.500-3.600 4.500-1.500 0-2.600-1.800-2.900-4.700z" fill="#fff" stroke="#000" stroke-width=".6"/>
<rect x="945" y="334" width="7" height="56"/><rect x="944" y="348" width="34.500" height="6.500"/><rect x="971" y="352" width="4.600" height="38"/><rect x="947" y="375" width="28" height="3.500"/>
<path d="M940 390l2.500-6h4v6zM975 390v-6h3.500l2.500 6z"/>
<path d="M923 389.500h116v14.300h163.700v6.200H1033v-14.300H923z"/>
<rect x="994" y="310" width="31" height="26.500" rx="2"/>
<rect x="989" y="335.600" width="44.500" height="9" /><rect x="993.400" y="344" width="36" height="46"/><path d="M987 390l2-5.500h6v5.500zM1027 390v-5.500h5l2 5.500z"/>
<path d="M1000.600 345.200h9c8 1 13.400 8 13.400 17v17.600h-22.400z" fill="#f0141e"/><rect x="1000.600" y="381.600" width="22.400" height="7" fill="#fff"/>
<rect x="995.400" y="312.700" width="16" height="5.800" rx="2.500" fill="#f0141e"/><rect x="1011.500" y="312.700" width="12.500" height="5.800" fill="#fff"/>
<rect x="995.400" y="322" width="16" height="5.800" rx="2.500" fill="#a9a736"/><rect x="1011.500" y="322" width="12.500" height="5.800" fill="#fff"/>
<rect x="1008.500" y="329.500" width="15.500" height="5" fill="#fff"/>
<rect x="1041.0" y="373.300" width="14" height="1" fill="#777"/><rect x="1041.4" y="375.200" width="18" height="3.300"/><path d="M1049.0 378l4.500 6h-3z"/><rect x="1052.8" y="378" width="3.600" height="27"/><rect x="1069.2" y="374" width="4.300" height="31"/><rect x="1047.6" y="382.800" width="29" height="3.600"/><rect x="1053.0" y="394.800" width="19" height="2.800"/><path d="M1045.5 404l3-5.500h4v5.500zM1071.5 404v-5.500h4.500l3 5.500z"/>
<rect x="1083.2" y="373.300" width="14" height="1" fill="#777"/><rect x="1083.6" y="375.200" width="18" height="3.300"/><path d="M1091.2 378l4.500 6h-3z"/><rect x="1095.0" y="378" width="3.600" height="27"/><rect x="1111.4" y="374" width="4.300" height="31"/><rect x="1089.8" y="382.800" width="29" height="3.600"/><rect x="1095.2" y="394.800" width="19" height="2.800"/><path d="M1087.7 404l3-5.500h4v5.500zM1113.7 404v-5.500h4.500l3 5.500z"/>
<rect x="1125.5" y="373.300" width="14" height="1" fill="#777"/><rect x="1125.9" y="375.200" width="18" height="3.300"/><path d="M1133.5 378l4.500 6h-3z"/><rect x="1137.3" y="378" width="3.600" height="27"/><rect x="1153.7" y="374" width="4.300" height="31"/><rect x="1132.1" y="382.800" width="29" height="3.600"/><rect x="1137.5" y="394.800" width="19" height="2.800"/><path d="M1130.0 404l3-5.500h4v5.500zM1156.0 404v-5.500h4.500l3 5.500z"/>
<ellipse cx="1078.5" cy="365.0" rx="9.500" ry="9.300"/>
<ellipse cx="1064.0" cy="364.0" rx="13" ry="10.600"/>
<ellipse cx="1063.6" cy="364.0" rx="11.800" ry="9.400" fill="#f6a51f"/>
<ellipse cx="1122.5" cy="365.0" rx="9.500" ry="9.300"/>
<ellipse cx="1108.0" cy="364.0" rx="13" ry="10.600"/>
<ellipse cx="1107.6" cy="364.0" rx="11.800" ry="9.400" fill="#f6a51f"/>
<ellipse cx="1163.0" cy="366.0" rx="9.500" ry="9.300"/>
<ellipse cx="1148.6" cy="365.0" rx="13" ry="10.600"/>
<ellipse cx="1148.2" cy="365.0" rx="11.800" ry="9.400" fill="#f6a51f"/>
<circle cx="1056" cy="355.500" r="3" fill="#f6a51f" stroke="#000" stroke-width=".9"/><circle cx="1063.500" cy="358.500" r="3" fill="#f6a51f" stroke="#000" stroke-width=".9"/>
<path d="M1143 358.500c2.500-2 6.500-2 8.500 0-.8 2.600-7.400 2.800-8.500 0z" fill="#fff" stroke="#000" stroke-width=".7"/>
<path d="M1116 376c3 4 2 9 4.500 13" fill="none" stroke="#000" stroke-width="2.400"/><path d="M1116.500 378c2 3 1.500 7 3.500 10" fill="none" stroke="#fff" stroke-width=".8"/>
<ellipse cx="1122" cy="362" rx="2.600" ry="3.200" fill="#fff" stroke="#000" stroke-width=".7"/>
</g>
<g font-family="'Liberation Sans',sans-serif" font-weight="700" font-size="8" fill="#000"><text x="1064" y="371.500">E</text><text x="1057.700" y="370.700" font-size="5.500">I</text><text x="1110.500" y="371.500">Z</text><text x="1102.200" y="371" font-size="5.500">I</text></g>
<g clip-path="url(#rc)"><circle cx="1107.200" cy="421.800" r="26.800" fill="#b3271b"/><circle cx="1107.200" cy="421.800" r="26.800" fill="#fff" filter="url(#nz2)" opacity=".22"/><circle cx="1107.200" cy="421.800" r="22" fill="none" stroke="#fff" stroke-width=".9"/></g>
<g font-family="'Liberation Sans',sans-serif" font-weight="700" font-size="8.300" text-anchor="middle" fill="#111" stroke="#111" stroke-width=".25"><text x="1037.7" y="267.8" transform="rotate(-6 1037.7 265.3)">J</text><text x="1045.9" y="265.9" transform="rotate(-13 1045.9 263.4)">I</text><text x="1050.2" y="265.9" transform="rotate(5 1050.2 263.4)">I</text><text x="1058.6" y="266.3" transform="rotate(-15 1058.6 263.8)" fill="#e8201c" stroke="#e8201c">X</text><text x="1064.5" y="266.7" transform="rotate(1 1064.5 264.2)" fill="#e8201c" stroke="#e8201c">X</text><text x="1071.7" y="263.3" transform="rotate(-5 1071.7 260.8)" fill="#e8201c" stroke="#e8201c">C</text><text x="1080.7" y="262.8" transform="rotate(-16 1080.7 260.3)">O</text><text x="1089.5" y="260.8" transform="rotate(0 1089.5 258.3)">G</text><text x="1100.6" y="261.8" transform="rotate(-17 1100.6 259.3)">D</text><text x="1110.8" y="261.8" transform="rotate(-2 1110.8 259.3)">Q</text><text x="1122.1" y="264.7" transform="rotate(-15 1122.1 262.2)">J</text><text x="1131.9" y="265.3" transform="rotate(-15 1131.9 262.8)">M</text><text x="1139.7" y="271.2" transform="rotate(-3 1139.7 268.7)">A</text><text x="1147.5" y="267.2" transform="rotate(12 1147.5 264.7)">S</text><text x="1164.7" y="269.8" transform="rotate(-14 1164.7 267.3)">K</text><text x="1174.5" y="272.1" transform="rotate(-10 1174.5 269.6)">J</text><text x="1009.8" y="275.6" transform="rotate(5 1009.8 273.1)">C</text><text x="1018.6" y="275.1" transform="rotate(16 1018.6 272.6)">E</text><text x="1030.3" y="271.7" transform="rotate(3 1030.3 269.2)" fill="#e8201c" stroke="#e8201c">I</text><text x="1026.0" y="277.0" transform="rotate(-4 1026.0 274.5)" fill="#e8201c" stroke="#e8201c">S</text><text x="1031.9" y="279.0" transform="rotate(17 1031.9 276.5)">A</text><text x="1041.1" y="278.0" transform="rotate(-16 1041.1 275.5)">K</text><text x="1049.8" y="277.0" transform="rotate(13 1049.8 274.5)">L</text><text x="1055.1" y="276.4" transform="rotate(-8 1055.1 273.9)">A</text><text x="1063.1" y="275.6" transform="rotate(-13 1063.1 273.1)">C</text><text x="1073.7" y="273.1" transform="rotate(-14 1073.7 270.6)">B</text><text x="1082.7" y="271.7" transform="rotate(-7 1082.7 269.2)">J</text><text x="1091.2" y="269.8" transform="rotate(11 1091.2 267.3)">W</text><text x="1099.1" y="271.2" transform="rotate(-11 1099.1 268.7)">N</text><text x="1108.8" y="271.2" transform="rotate(3 1108.8 268.7)">A</text><text x="1128.4" y="274.1" transform="rotate(5 1128.4 271.6)">U</text><text x="1155.3" y="275.1" transform="rotate(-5 1155.3 272.6)">B</text><text x="1164.7" y="278.0" transform="rotate(2 1164.7 275.5)">H</text><text x="1188.1" y="277.6" transform="rotate(-16 1188.1 275.1)">F</text><text x="1175.8" y="282.9" transform="rotate(-16 1175.8 280.4)">L</text><text x="1180.3" y="278.4" transform="rotate(-11 1180.3 275.9)" fill="#e8201c" stroke="#e8201c">E</text><text x="994.8" y="288.7" transform="rotate(6 994.8 286.2)">P</text><text x="1005.5" y="283.9" transform="rotate(-3 1005.5 281.4)">Q</text><text x="1015.7" y="284.2" transform="rotate(-7 1015.7 281.7)">U</text><text x="1021.5" y="283.9" transform="rotate(3 1021.5 281.4)">R</text><text x="1028.0" y="288.1" transform="rotate(-2 1028.0 285.6)">D</text><text x="1036.2" y="289.3" transform="rotate(-7 1036.2 286.8)">H</text><text x="1043.0" y="289.3" transform="rotate(11 1043.0 286.8)">A</text><text x="1050.2" y="286.8" transform="rotate(7 1050.2 284.3)">Z</text><text x="1062.0" y="284.2" transform="rotate(-9 1062.0 281.7)">A</text><text x="1070.4" y="286.2" transform="rotate(3 1070.4 283.7)">N</text><text x="1081.5" y="281.9" transform="rotate(1 1081.5 279.4)">A</text><text x="1090.5" y="278.0" transform="rotate(14 1090.5 275.5)">C</text><text x="1103.6" y="278.0" transform="rotate(8 1103.6 275.5)">D</text><text x="1116.2" y="277.6" transform="rotate(-8 1116.2 275.1)">O</text><text x="1135.8" y="280.9" transform="rotate(17 1135.8 278.4)">T</text><text x="1147.1" y="281.9" transform="rotate(-14 1147.1 279.4)">X</text><text x="1159.2" y="287.8" transform="rotate(-3 1159.2 285.3)">X</text><text x="1167.4" y="290.1" transform="rotate(9 1167.4 287.6)">A</text><text x="1175.8" y="291.3" transform="rotate(-13 1175.8 288.8)">Z</text><text x="1183.2" y="288.7" transform="rotate(-0 1183.2 286.2)">I</text><text x="1189.5" y="287.8" transform="rotate(-17 1189.5 285.3)">I</text><text x="1196.3" y="286.8" transform="rotate(6 1196.3 284.3)">E</text><text x="989.3" y="298.5" transform="rotate(10 989.3 296.0)">X</text><text x="997.5" y="297.5" transform="rotate(3 997.5 295.0)">L</text><text x="1004.5" y="296.5" transform="rotate(14 1004.5 294.0)">D</text><text x="1014.3" y="296.5" transform="rotate(-7 1014.3 294.0)">E</text><text x="1022.9" y="296.0" transform="rotate(7 1022.9 293.5)">F</text><text x="1031.3" y="298.5" transform="rotate(3 1031.3 296.0)">E</text><text x="1043.0" y="299.5" transform="rotate(3 1043.0 297.0)">I</text><text x="1047.3" y="299.5" transform="rotate(-2 1047.3 297.0)">I</text><text x="1057.3" y="294.6" transform="rotate(12 1057.3 292.1)">M</text><text x="1064.5" y="294.6" transform="rotate(16 1064.5 292.1)">A</text><text x="1075.2" y="296.5" transform="rotate(-1 1075.2 294.0)">K</text><text x="1084.0" y="291.7" transform="rotate(6 1084.0 289.2)">S</text><text x="1089.9" y="291.3" transform="rotate(-16 1089.9 288.8)">U</text><text x="1099.6" y="286.2" transform="rotate(7 1099.6 283.7)">B</text><text x="1108.4" y="283.9" transform="rotate(5 1108.4 281.4)">A</text><text x="1124.5" y="283.9" transform="rotate(18 1124.5 281.4)">G</text><text x="1112.7" y="292.6" transform="rotate(12 1112.7 290.1)">J</text><text x="1118.6" y="292.6" transform="rotate(-8 1118.6 290.1)">D</text><text x="1127.6" y="292.6" transform="rotate(-4 1127.6 290.1)">I</text><text x="1135.8" y="290.7" transform="rotate(6 1135.8 288.2)">Y</text><text x="1144.6" y="290.7" transform="rotate(-17 1144.6 288.2)">R</text><text x="1151.4" y="289.7" transform="rotate(-1 1151.4 287.2)">C</text><text x="1156.9" y="298.5" transform="rotate(-12 1156.9 296.0)">H</text><text x="1176.4" y="299.5" transform="rotate(-14 1176.4 297.0)">X</text><text x="1195.4" y="297.1" transform="rotate(-16 1195.4 294.6)">D</text><text x="1140.7" y="297.9" transform="rotate(10 1140.7 295.4)" fill="#e8201c" stroke="#e8201c">X</text><text x="1165.5" y="303.8" transform="rotate(-13 1165.5 301.3)">X</text><text x="972.1" y="317.1" transform="rotate(-9 972.1 314.6)">Z</text><text x="978.0" y="314.7" transform="rotate(-4 978.0 312.2)">E</text><text x="984.4" y="308.3" transform="rotate(13 984.4 305.8)">C</text><text x="992.2" y="305.7" transform="rotate(-15 992.2 303.2)">M</text><text x="1004.9" y="307.9" transform="rotate(-2 1004.9 305.4)" fill="#e8201c" stroke="#e8201c">T</text><text x="1000.6" y="305.7" transform="rotate(2 1000.6 303.2)" fill="#e8201c" stroke="#e8201c">S</text><text x="1014.7" y="308.3" transform="rotate(14 1014.7 305.8)">U</text><text x="1024.1" y="308.3" transform="rotate(11 1024.1 305.8)">V</text><text x="1035.2" y="308.3" transform="rotate(13 1035.2 305.8)">W</text><text x="1046.3" y="308.3" transform="rotate(-8 1046.3 305.8)" fill="#e8201c" stroke="#e8201c">X</text><text x="1056.1" y="308.3" transform="rotate(-3 1056.1 305.8)">Y</text><text x="1064.5" y="310.8" transform="rotate(-5 1064.5 308.3)">S</text><text x="1068.4" y="303.0" transform="rotate(14 1068.4 300.5)">A</text><text x="1083.4" y="299.9" transform="rotate(16 1083.4 297.4)">X</text><text x="1096.7" y="299.1" transform="rotate(-13 1096.7 296.6)">T</text><text x="1106.9" y="297.1" transform="rotate(-12 1106.9 294.6)">L</text><text x="1117.2" y="302.4" transform="rotate(-10 1117.2 299.9)">S</text><text x="1127.0" y="299.5" transform="rotate(-10 1127.0 297.0)">F</text><text x="1138.7" y="307.7" transform="rotate(-1 1138.7 305.2)">Y</text><text x="1144.2" y="308.9" transform="rotate(3 1144.2 306.4)" fill="#e8201c" stroke="#e8201c">S</text><text x="1149.8" y="307.7" transform="rotate(-9 1149.8 305.2)">Y</text><text x="1157.7" y="308.3" transform="rotate(-18 1157.7 305.8)" fill="#e8201c" stroke="#e8201c">S</text><text x="1164.7" y="314.7" transform="rotate(-3 1164.7 312.2)">V</text><text x="1172.9" y="311.2" transform="rotate(-5 1172.9 308.7)">E</text><text x="1181.7" y="309.2" transform="rotate(2 1181.7 306.7)">I</text><text x="1187.5" y="303.8" transform="rotate(16 1187.5 301.3)">C</text><text x="1028.8" y="316.7" transform="rotate(7 1028.8 314.2)">O</text><text x="1038.1" y="319.4" transform="rotate(1 1038.1 316.9)">I</text><text x="1045.0" y="320.0" transform="rotate(4 1045.0 317.5)">G</text><text x="1053.4" y="320.0" transform="rotate(6 1053.4 317.5)">P</text><text x="1063.5" y="320.6" transform="rotate(-16 1063.5 318.1)">Q</text><text x="1073.7" y="320.6" transform="rotate(14 1073.7 318.1)">R</text><text x="1083.0" y="320.0" transform="rotate(10 1083.0 317.5)">D</text><text x="1075.6" y="308.9" transform="rotate(13 1075.6 306.4)">A</text><text x="1085.0" y="308.9" transform="rotate(11 1085.0 306.4)">B</text><text x="1093.8" y="308.9" transform="rotate(-4 1093.8 306.4)">E</text><text x="1099.1" y="308.9" transform="rotate(-4 1099.1 306.4)">E</text><text x="1108.4" y="308.3" transform="rotate(-14 1108.4 305.8)">B</text><text x="1093.2" y="316.1" transform="rotate(5 1093.2 313.6)">H</text><text x="1099.6" y="316.1" transform="rotate(-16 1099.6 313.6)">A</text><text x="1108.8" y="321.0" transform="rotate(-16 1108.8 318.5)">M</text><text x="1115.9" y="315.5" transform="rotate(-10 1115.9 313.0)">C</text><text x="1123.7" y="320.0" transform="rotate(-12 1123.7 317.5)">O</text><text x="1121.7" y="311.2" transform="rotate(-6 1121.7 308.7)">T</text><text x="1127.6" y="311.2" transform="rotate(-16 1127.6 308.7)">U</text><text x="1133.4" y="314.7" transform="rotate(-18 1133.4 312.2)">P</text><text x="1139.7" y="319.0" transform="rotate(-13 1139.7 316.5)">A</text><text x="1147.1" y="318.0" transform="rotate(-14 1147.1 315.5)">Q</text><text x="1155.3" y="316.7" transform="rotate(-5 1155.3 314.2)">R</text><text x="1055.7" y="326.8" transform="rotate(-17 1055.7 324.3)">D</text><text x="1064.5" y="330.3" transform="rotate(13 1064.5 327.8)">G</text><text x="1073.7" y="331.1" transform="rotate(4 1073.7 328.6)">U</text><text x="1083.0" y="331.1" transform="rotate(-13 1083.0 328.6)">V</text><text x="1091.8" y="325.3" transform="rotate(-9 1091.8 322.8)">C</text><text x="1099.6" y="325.3" transform="rotate(-5 1099.6 322.8)">N</text><text x="1109.4" y="329.7" transform="rotate(-5 1109.4 327.2)">K</text><text x="1117.2" y="325.8" transform="rotate(-14 1117.2 323.3)">H</text><text x="1126.0" y="330.7" transform="rotate(13 1126.0 328.2)">J</text><text x="1132.3" y="323.3" transform="rotate(18 1132.3 320.8)">K</text><text x="1136.8" y="329.2" transform="rotate(-1 1136.8 326.7)">O</text><text x="1069.0" y="337.6" transform="rotate(-1 1069.0 335.1)">J</text><text x="1080.1" y="342.4" transform="rotate(-15 1080.1 339.9)">W</text><text x="1116.2" y="336.6" transform="rotate(-14 1116.2 334.1)">X</text><text x="1124.1" y="338.1" transform="rotate(-6 1124.1 335.6)">L</text><text x="1131.9" y="337.0" transform="rotate(-8 1131.9 334.5)">R</text><text x="1072.3" y="346.7" transform="rotate(12 1072.3 344.2)">T</text><text x="1078.8" y="352.2" transform="rotate(-12 1078.8 349.7)">K</text><text x="1114.3" y="344.4" transform="rotate(-17 1114.3 341.9)">G</text><text x="1121.1" y="348.7" transform="rotate(16 1121.1 346.2)">E</text><text x="1129.5" y="347.3" transform="rotate(1 1129.5 344.8)">S</text><text x="1116.2" y="358.1" transform="rotate(-13 1116.2 355.6)">C</text><text x="1123.7" y="357.7" transform="rotate(2 1123.7 355.2)">P</text></g>
</svg>
<span class="t" id="t82" style="left:656.50px;top:262.00px;font-size:53.30px;color:#1c1c1c;font-weight:700;font-family:'Liberation Mono', monospace;transform:scaleX(0.6560);-webkit-text-stroke:1.6px #1c1c1c;">APROXIMACION</span>
<span class="t" id="t83" style="left:656.50px;top:310.00px;font-size:53.30px;color:#1c1c1c;font-weight:700;font-family:'Liberation Mono', monospace;transform:scaleX(0.6521);-webkit-text-stroke:1.6px #1c1c1c;">CONCEPTUAL O</span>
<span class="t" id="t84" style="left:656.50px;top:359.00px;font-size:53.30px;color:#1c1c1c;font-weight:700;font-family:'Liberation Mono', monospace;transform:scaleX(0.6266);-webkit-text-stroke:1.6px #1c1c1c;">TEÓRICA</span>
<svg class="a" style="left:655px;top:264px" width="256" height="138"><rect width="256" height="138" fill="#d7d7d7" filter="url(#nz2)" opacity=".5"/></svg>
<span class="t" id="t85" style="left:656.70px;top:416.00px;font-size:12.60px;color:#111;font-family:'DejaVu Serif', 'Liberation Serif', serif;transform:scaleX(1.0119);-webkit-text-stroke:.4px #111;">Acercamiento desde el saber y el hacer</span>
<span class="t" id="t86" style="left:656.70px;top:438.00px;font-size:12.60px;color:#111;font-family:'DejaVu Serif', 'Liberation Serif', serif;transform:scaleX(0.9970);-webkit-text-stroke:.4px #111;">Dr. Genaro Aguirre Aguilar</span>
<div class="a" style="left:1170px;top:192px;width:37px;height:25px;background:#0f70d7;border-radius:0 0 0 3px"></div>
<div class="a" style="left:1184px;top:204px;width:9px;height:1.600px;background:#b5d3f3"></div>
<div class="a" style="left:599px;top:534px;width:608px;height:31px;background:#f3f6f9;border-top:1px solid #e6ebf0;box-sizing:border-box"></div>
<svg class="a" style="left:824px;top:542px" width="12" height="16" viewBox="0 0 12 16"><path d="M9.300 1.300L2.800 8l6.500 6.700" fill="none" stroke="#9aa7b3" stroke-width="1.300"/></svg>
<span class="t" id="t87" style="left:855.00px;top:543.00px;font-size:13.20px;color:#4e5a66;transform:scaleX(0.9828);">Diapositiva 1</span>
<svg class="a" style="left:942px;top:542.500px" width="8" height="15" viewBox="0 0 8 15"><path d="M4 1L7.300 6H.7zM4 14L7.300 9H.7z" fill="#36424e"/></svg>
<svg class="a" style="left:964.500px;top:542px" width="12" height="16" viewBox="0 0 12 16"><path d="M2.700 1.300L9.200 8l-6.500 6.700" fill="none" stroke="#46525e" stroke-width="1.300"/></svg>
<svg class="a" style="left:1015px;top:541px" width="18" height="18" viewBox="-9 -9 18 18"><circle r="7.400" fill="none" stroke="#a5b1bc" stroke-width="1.100"/><path d="M-4 0h8" stroke="#a5b1bc" stroke-width="1.100"/></svg>
<span class="t" id="t88" style="left:1053.60px;top:545.00px;font-size:11.30px;color:#a5b1bc;transform:scaleX(0.8924);">100 %</span>
<svg class="a" style="left:1102.700px;top:541px" width="18" height="18" viewBox="-9 -9 18 18"><circle r="7.400" fill="none" stroke="#46525e" stroke-width="1.100"/><path d="M-4 0h8M0 -4v8" stroke="#46525e" stroke-width="1.100"/></svg>
<svg class="a" style="left:1140px;top:544px" width="19" height="12" viewBox="0 0 19 12"><path d="M1.500 6h16M4.500 3L1.500 6l3 3M14.500 3l3 3-3 3" fill="none" stroke="#46525e" stroke-width="1.200"/></svg>
<svg class="a" style="left:1178.500px;top:542px" width="15" height="15" viewBox="0 0 15 15"><path d="M1 4.800V1h3.800M10.200 1H14v3.800M14 10.200V14h-3.800M4.800 14H1v-3.800M1.300 1.300l4 4M13.700 1.300l-4 4M13.700 13.700l-4-4M1.300 13.700l4-4" fill="none" stroke="#36424e" stroke-width="1.200"/></svg>
<div class="a" style="left:1237px;top:315.500px;width:32.200px;height:126px;background:#fff;border-radius:4px"></div>
<div class="a" style="left:1237px;top:347.0px;width:32.500px;height:1px;background:#c8d0d8"></div>
<div class="a" style="left:1237px;top:378.5px;width:32.500px;height:1px;background:#c8d0d8"></div>
<div class="a" style="left:1237px;top:410.0px;width:32.500px;height:1px;background:#c8d0d8"></div>
<svg class="a" style="left:1243px;top:319px" width="20" height="22" viewBox="0 0 20 22"><path d="M6.300 12V5.200a1.300 1.300 0 0 1 2.600 0V3.600a1.300 1.300 0 0 1 2.600 0v1a1.300 1.300 0 0 1 2.600 0v1.600a1.300 1.300 0 0 1 2.600 0v8.300c0 3.300-2.300 5.700-5.400 5.700h-1.500c-2.100 0-3.500-.9-4.600-2.700L2.500 13c-.6-1.100.8-2.200 1.800-1.200z" fill="none" stroke="#4e5a66" stroke-width="1.100" stroke-linejoin="round"/><path d="M8.900 5v5.500M11.500 4.500v6M14.100 6v4.500" stroke="#4e5a66" stroke-width="1"/></svg>
<svg class="a" style="left:1239px;top:339px" width="8" height="8"><path d="M0 0v7.500h7.500z" fill="#3b4854"/></svg>
<svg class="a" style="left:1244px;top:353px" width="19" height="20" viewBox="0 0 19 20"><path d="M2.500 5.800h7.800a5.800 5.800 0 0 1 0 11.600H8" fill="none" stroke="#4e5a66" stroke-width="1.200"/><path d="M6.500 1.500L2.300 5.800l4.200 4.300" fill="none" stroke="#4e5a66" stroke-width="1.200"/></svg>
<svg class="a" style="left:1245px;top:384px" width="17" height="20" viewBox="0 0 17 20"><path d="M1 4h15M5.500 3.800V1.600h6v2.200M2.800 4.300l.9 13.200c0 .6.500 1 1.100 1h7.400c.6 0 1.100-.4 1.100-1l.9-13.200M6 7v9M8.500 7v9M11 7v9" fill="none" stroke="#4e5a66" stroke-width="1.100"/></svg>
<svg class="a" style="left:1243.500px;top:417px" width="20" height="17" viewBox="0 0 20 17"><rect x=".8" y=".8" width="18.400" height="15" rx="1.500" fill="none" stroke="#4e5a66" stroke-width="1.100"/><path d="M3.500 10.500c2-3 3.300-3.300 4.800-2.200 1.700 1.200 2.500.6 3.800-.6 1.500-1.400 2.600-2 4.400-2.200" fill="none" stroke="#4e5a66" stroke-width="1.100"/></svg>
<div class="a" style="left:836px;top:576px;width:135px;height:101px;border-radius:4px;overflow:hidden;background:#5a3124">
<svg width="135" height="101" viewBox="0 0 135 101" style="position:absolute;left:0;top:0"><defs><filter id="bl" x="-5%" y="-5%" width="110%" height="110%"><feGaussianBlur stdDeviation=".55"/></filter><filter id="bl2" x="-10%" y="-10%" width="120%" height="120%"><feGaussianBlur stdDeviation="1.300"/></filter></defs>
<g filter="url(#bl)">
<rect width="135" height="101" fill="#63362a"/>
<rect x="5.0" y="4.1" width="2.4" height="10.9" fill="#2f3550"/><rect x="7.2" y="3.5" width="2.8" height="11.5" fill="#ece7e0"/><rect x="9.8" y="4.6" width="2.8" height="10.4" fill="#402028"/><rect x="12.4" y="4.1" width="1.7" height="10.9" fill="#a85a63"/><rect x="13.9" y="4.3" width="1.7" height="10.7" fill="#8d3a44"/><rect x="15.4" y="5.4" width="1.4" height="9.6" fill="#aeb6c4"/><rect x="16.6" y="4.6" width="2.8" height="10.4" fill="#6d7a9a"/><rect x="19.2" y="3.1" width="2.8" height="11.9" fill="#8d3a44"/><rect x="21.8" y="4.5" width="1.7" height="10.5" fill="#b7a9ab"/><rect x="23.3" y="4.1" width="2.4" height="10.9" fill="#c7b7a0"/><rect x="25.5" y="3.6" width="1.7" height="11.4" fill="#d8d2d2"/><rect x="27.0" y="3.0" width="2.0" height="12.0" fill="#402028"/><rect x="28.8" y="4.6" width="1.4" height="10.4" fill="#2f3550"/><rect x="30.0" y="4.8" width="2.4" height="10.2" fill="#8d3a44"/><rect x="32.2" y="4.3" width="2.0" height="10.7" fill="#b7a9ab"/><rect x="34.0" y="4.4" width="1.4" height="10.6" fill="#8d3a44"/><rect x="35.2" y="3.3" width="1.4" height="11.7" fill="#aeb6c4"/><rect x="36.4" y="3.2" width="2.0" height="11.8" fill="#aeb6c4"/><rect x="38.2" y="3.5" width="1.4" height="11.5" fill="#e2ddd8"/><rect x="39.4" y="3.9" width="1.4" height="11.1" fill="#402028"/><rect x="40.6" y="3.2" width="2.4" height="11.8" fill="#332630"/><rect x="42.8" y="3.8" width="1.7" height="11.2" fill="#4a3a45"/><rect x="44.3" y="3.0" width="2.0" height="12.0" fill="#c7b7a0"/><rect x="46.1" y="3.3" width="2.4" height="11.7" fill="#a85a63"/><rect x="48.3" y="3.1" width="1.4" height="11.9" fill="#e2ddd8"/><rect x="49.5" y="4.7" width="2.4" height="10.3" fill="#6d7a9a"/><rect x="51.7" y="4.3" width="1.7" height="10.7" fill="#2f3550"/><rect x="53.2" y="4.6" width="1.7" height="10.4" fill="#332630"/><rect x="54.7" y="4.1" width="1.4" height="10.9" fill="#aeb6c4"/><rect x="55.9" y="3.7" width="1.7" height="11.3" fill="#e2ddd8"/><rect x="57.4" y="5.5" width="2.8" height="9.5" fill="#9c8f95"/><rect x="60.0" y="3.5" width="1.4" height="11.5" fill="#ece7e0"/><rect x="61.2" y="3.1" width="2.8" height="11.9" fill="#a85a63"/><rect x="63.8" y="4.1" width="1.7" height="10.9" fill="#ece7e0"/><rect x="65.3" y="5.1" width="1.4" height="9.9" fill="#c7b7a0"/><rect x="66.5" y="3.2" width="2.4" height="11.8" fill="#8d3a44"/><rect x="68.7" y="3.0" width="1.7" height="12.0" fill="#b7a9ab"/>
<rect x="70" y="0" width="37" height="15" fill="#70402f"/><rect x="69" y="0" width="2.500" height="16" fill="#94553f"/><rect x="106" y="0" width="2.500" height="16" fill="#94553f"/><rect x="108.500" y="0" width="27" height="15" fill="#5b3226"/>
<rect x="76" y="8.500" width="14" height="4.500" fill="#8d7d7b"/><rect x="92" y="10.500" width="13" height="3.500" fill="#5a4d4e"/><rect x="110" y="9" width="6" height="5" fill="#8a6a4a"/>
<rect x="0.0" y="22.6" width="2.0" height="11.4" fill="#6a2229"/><rect x="1.8" y="23.1" width="1.7" height="10.9" fill="#402028"/><rect x="3.3" y="21.5" width="1.7" height="12.5" fill="#aeb6c4"/><rect x="4.8" y="23.3" width="1.7" height="10.7" fill="#9c8f95"/><rect x="6.3" y="22.8" width="2.8" height="11.2" fill="#b7a9ab"/><rect x="8.9" y="22.7" width="1.7" height="11.3" fill="#ece7e0"/><rect x="10.4" y="22.5" width="2.4" height="11.5" fill="#402028"/><rect x="12.6" y="21.3" width="2.4" height="12.7" fill="#c9c0bf"/><rect x="14.8" y="23.4" width="1.4" height="10.6" fill="#d8d2d2"/><rect x="16.0" y="21.6" width="1.7" height="12.4" fill="#aeb6c4"/><rect x="17.5" y="21.7" width="2.8" height="12.3" fill="#402028"/><rect x="20.1" y="21.3" width="1.7" height="12.7" fill="#8d3a44"/><rect x="21.6" y="21.7" width="2.4" height="12.3" fill="#8d3a44"/><rect x="23.8" y="21.2" width="1.7" height="12.8" fill="#e2ddd8"/><rect x="25.3" y="21.6" width="2.4" height="12.4" fill="#2f3550"/><rect x="27.5" y="21.7" width="1.4" height="12.3" fill="#6d7a9a"/><rect x="28.7" y="21.2" width="2.8" height="12.8" fill="#4f5f86"/><rect x="31.3" y="23.5" width="1.7" height="10.5" fill="#2f3550"/><rect x="32.8" y="22.5" width="2.8" height="11.5" fill="#4f5f86"/><rect x="35.4" y="23.3" width="1.4" height="10.7" fill="#402028"/><rect x="36.6" y="21.1" width="2.0" height="12.9" fill="#c9c0bf"/><rect x="38.4" y="21.2" width="1.4" height="12.8" fill="#402028"/><rect x="39.6" y="21.3" width="2.0" height="12.7" fill="#c7b7a0"/><rect x="41.4" y="22.1" width="1.4" height="11.9" fill="#8d3a44"/><rect x="42.6" y="23.3" width="2.0" height="10.7" fill="#c9c0bf"/><rect x="44.4" y="21.9" width="1.7" height="12.1" fill="#c7b7a0"/><rect x="45.9" y="23.2" width="2.4" height="10.8" fill="#8d3a44"/>
<rect x="90.0" y="22.1" width="2.4" height="11.9" fill="#4a2430"/><rect x="92.2" y="22.0" width="2.4" height="12.0" fill="#d0c6c0"/><rect x="94.4" y="23.5" width="2.4" height="10.5" fill="#64405a"/><rect x="96.6" y="22.2" width="2.8" height="11.8" fill="#cbbfc4"/><rect x="99.2" y="24.2" width="1.4" height="9.8" fill="#e9e4e1"/><rect x="100.4" y="24.3" width="2.0" height="9.7" fill="#64405a"/><rect x="102.2" y="23.1" width="2.8" height="10.9" fill="#b9b2b6"/><rect x="104.8" y="23.3" width="2.8" height="10.7" fill="#cbbfc4"/><rect x="107.4" y="22.8" width="2.8" height="11.2" fill="#e0dada"/><rect x="110.0" y="22.1" width="1.4" height="11.9" fill="#b9b2b6"/><rect x="111.2" y="23.9" width="1.4" height="10.1" fill="#b9b2b6"/><rect x="112.4" y="24.2" width="2.4" height="9.8" fill="#e9e4e1"/><rect x="114.6" y="22.4" width="2.0" height="11.6" fill="#e9e4e1"/><rect x="116.4" y="23.3" width="2.8" height="10.7" fill="#8d6f86"/><rect x="119.0" y="24.3" width="2.0" height="9.7" fill="#3a2a3a"/><rect x="120.8" y="22.8" width="2.4" height="11.2" fill="#8d6f86"/><rect x="123.0" y="23.6" width="2.0" height="10.4" fill="#8d6f86"/><rect x="124.8" y="23.0" width="1.7" height="11.0" fill="#8d6f86"/><rect x="126.3" y="22.5" width="2.8" height="11.5" fill="#a7a0ad"/><rect x="128.9" y="22.9" width="1.7" height="11.1" fill="#b9b2b6"/><rect x="130.4" y="22.2" width="1.4" height="11.8" fill="#35304a"/><rect x="131.6" y="22.3" width="2.0" height="11.7" fill="#b98a98"/><rect x="133.4" y="24.3" width="2.4" height="9.7" fill="#e9e4e1"/>
<rect x="34.0" y="43.6" width="2.4" height="11.4" fill="#aeb6c4"/><rect x="36.2" y="43.8" width="2.4" height="11.2" fill="#c7b7a0"/><rect x="38.4" y="42.8" width="2.8" height="12.2" fill="#2f3550"/><rect x="41.0" y="44.2" width="1.4" height="10.8" fill="#4a3a45"/><rect x="42.2" y="43.4" width="1.4" height="11.6" fill="#4a3a45"/><rect x="43.4" y="43.6" width="2.0" height="11.4" fill="#e2ddd8"/><rect x="45.2" y="42.5" width="2.4" height="12.5" fill="#2f3550"/>
<rect x="90.0" y="42.9" width="2.0" height="12.1" fill="#8d6f86"/><rect x="91.8" y="41.3" width="1.4" height="13.7" fill="#3a2a3a"/><rect x="93.0" y="42.3" width="1.4" height="12.7" fill="#3a2a3a"/><rect x="94.2" y="42.7" width="2.0" height="12.3" fill="#cbbfc4"/><rect x="96.0" y="41.6" width="1.7" height="13.4" fill="#b9b2b6"/><rect x="97.5" y="42.2" width="1.4" height="12.8" fill="#4a2430"/><rect x="98.7" y="41.6" width="1.4" height="13.4" fill="#b98a98"/><rect x="99.9" y="42.7" width="2.0" height="12.3" fill="#8a2d39"/><rect x="101.7" y="42.5" width="2.8" height="12.5" fill="#8a2d39"/><rect x="104.3" y="43.1" width="1.7" height="11.9" fill="#64405a"/><rect x="105.8" y="42.0" width="1.7" height="13.0" fill="#cbbfc4"/><rect x="107.3" y="42.1" width="2.4" height="12.9" fill="#b98a98"/><rect x="109.5" y="43.2" width="1.7" height="11.8" fill="#3a2a3a"/><rect x="111.0" y="42.4" width="1.4" height="12.6" fill="#64405a"/><rect x="112.2" y="43.0" width="2.8" height="12.0" fill="#4a2430"/><rect x="114.8" y="41.8" width="2.0" height="13.2" fill="#b9b2b6"/><rect x="116.6" y="42.8" width="1.7" height="12.2" fill="#cbbfc4"/><rect x="118.1" y="41.6" width="1.4" height="13.4" fill="#8d6f86"/><rect x="119.3" y="43.4" width="2.4" height="11.6" fill="#cbbfc4"/><rect x="121.5" y="43.3" width="2.8" height="11.7" fill="#4a2430"/><rect x="124.1" y="43.1" width="2.0" height="11.9" fill="#35304a"/><rect x="125.9" y="41.2" width="2.0" height="13.8" fill="#8a2d39"/><rect x="127.7" y="42.4" width="2.4" height="12.6" fill="#a7a0ad"/><rect x="129.9" y="43.3" width="2.0" height="11.7" fill="#b9b2b6"/><rect x="131.7" y="43.2" width="1.7" height="11.8" fill="#4a2430"/><rect x="133.2" y="41.1" width="2.4" height="13.9" fill="#4a2430"/>
<rect x="119" y="41" width="3" height="14" fill="#8b2231"/>
<rect x="27.0" y="62.7" width="2.8" height="13.3" fill="#c7b7a0" transform="skewX(-14)"/><rect x="29.6" y="61.4" width="1.7" height="14.6" fill="#402028" transform="skewX(-14)"/><rect x="31.1" y="63.1" width="2.8" height="12.9" fill="#d8d2d2" transform="skewX(-14)"/><rect x="33.7" y="62.4" width="2.4" height="13.6" fill="#402028" transform="skewX(-14)"/><rect x="35.9" y="62.1" width="1.4" height="13.9" fill="#b7a9ab" transform="skewX(-14)"/><rect x="37.1" y="63.1" width="2.8" height="12.9" fill="#9c8f95" transform="skewX(-14)"/><rect x="39.7" y="62.3" width="2.8" height="13.7" fill="#6d7a9a" transform="skewX(-14)"/><rect x="42.3" y="61.8" width="2.8" height="14.2" fill="#4a3a45" transform="skewX(-14)"/><rect x="44.9" y="61.8" width="2.4" height="14.2" fill="#ece7e0" transform="skewX(-14)"/><rect x="47.1" y="61.7" width="1.7" height="14.3" fill="#d8d2d2" transform="skewX(-14)"/><rect x="48.6" y="62.0" width="2.4" height="14.0" fill="#ece7e0" transform="skewX(-14)"/><rect x="50.8" y="61.0" width="1.4" height="15.0" fill="#d8d2d2" transform="skewX(-14)"/><rect x="52.0" y="62.3" width="2.4" height="13.7" fill="#e2ddd8" transform="skewX(-14)"/><rect x="54.2" y="63.3" width="1.4" height="12.7" fill="#d8d2d2" transform="skewX(-14)"/><rect x="55.4" y="62.2" width="2.8" height="13.8" fill="#a85a63" transform="skewX(-14)"/><rect x="58.0" y="63.3" width="1.7" height="12.7" fill="#8d3a44" transform="skewX(-14)"/><rect x="59.5" y="63.3" width="2.4" height="12.7" fill="#332630" transform="skewX(-14)"/><rect x="61.7" y="61.6" width="2.4" height="14.4" fill="#4a3a45" transform="skewX(-14)"/><rect x="63.9" y="61.8" width="2.4" height="14.2" fill="#4f5f86" transform="skewX(-14)"/>
<rect x="86.0" y="61.8" width="2.4" height="14.2" fill="#8a2d39"/><rect x="88.2" y="62.5" width="1.7" height="13.5" fill="#64405a"/><rect x="89.7" y="62.8" width="2.0" height="13.2" fill="#b98a98"/><rect x="91.5" y="61.5" width="1.4" height="14.5" fill="#e0dada"/><rect x="92.7" y="62.7" width="1.7" height="13.3" fill="#e0dada"/><rect x="94.2" y="61.9" width="2.0" height="14.1" fill="#35304a"/><rect x="96.0" y="61.3" width="2.8" height="14.7" fill="#b9b2b6"/><rect x="98.6" y="63.1" width="2.8" height="12.9" fill="#cbbfc4"/><rect x="101.2" y="62.8" width="2.8" height="13.2" fill="#e9e4e1"/><rect x="103.8" y="61.1" width="2.8" height="14.9" fill="#64405a"/><rect x="106.4" y="62.5" width="2.4" height="13.5" fill="#8a2d39"/><rect x="108.6" y="63.2" width="2.8" height="12.8" fill="#8d6f86"/><rect x="111.2" y="61.5" width="2.8" height="14.5" fill="#3a2a3a"/><rect x="113.8" y="62.5" width="1.7" height="13.5" fill="#8a2d39"/><rect x="115.3" y="63.3" width="1.7" height="12.7" fill="#8d6f86"/><rect x="116.8" y="61.8" width="2.0" height="14.2" fill="#b98a98"/><rect x="118.6" y="61.5" width="2.0" height="14.5" fill="#8d6f86"/><rect x="120.4" y="61.3" width="1.7" height="14.7" fill="#cbbfc4"/>
<rect x="120" y="66" width="15" height="2.200" fill="#8d5f8d"/><rect x="120" y="68.500" width="15" height="2.200" fill="#c9b8c6"/><rect x="120" y="71" width="15" height="2.200" fill="#7c4f7c"/><rect x="120" y="73.500" width="15" height="2.200" fill="#b9a3b9"/>
<rect x="0" y="15.0" width="135" height="3" fill="#94503a"/><rect x="0" y="18.0" width="135" height="3.200" fill="#41211a"/>
<rect x="0" y="34.5" width="135" height="3" fill="#94503a"/><rect x="0" y="37.5" width="135" height="3.200" fill="#41211a"/>
<rect x="0" y="55.5" width="135" height="3" fill="#94503a"/><rect x="0" y="58.5" width="135" height="3.200" fill="#41211a"/>
<rect x="0" y="76.5" width="135" height="3" fill="#94503a"/><rect x="0" y="79.5" width="135" height="3.200" fill="#41211a"/>
<rect x="0" y="82.500" width="135" height="19" fill="#4b2a22"/>
<rect x="0" y="47.500" width="6" height="7.500" fill="#b4d2df"/><rect x="8" y="46" width="14.500" height="9" fill="#a8946f"/><rect x="10.500" y="48" width="9.500" height="5" fill="#6f6a7a"/><rect x="23.500" y="48.500" width="10.500" height="6.500" fill="#3e6a58"/>
<rect x="0" y="20" width="5" height="14" fill="#6d3a2c"/>
</g>
<g filter="url(#bl2)">
<path d="M0 101c3-17 20-27 46-29l40 0c24 2 42 11 49 29z" fill="#b6b2b3"/>
<path d="M57 68h24v13c-7 5-17 5-24 0z" fill="#91705e"/>
<path d="M45.500 44c-3-22 8-34.500 23-34.500s26 12.500 23 34.500c-2-8-5-14-8-17h-30c-3 3-6 9-8 17z" fill="#55504e"/>
<path d="M48.500 40c-1-14 8-21 20-21s21 7 20 21c-.5 9-2.500 19-6 26-3.500 6.500-8.500 9.500-14 9.500s-10.500-3-14-9.500c-3.500-7-5.500-17-6-26z" fill="#b18f7c"/>
<path d="M51 27c3-9 32-9 35 0-5-4-30-4-35 0z" fill="#6f6763"/>
<path d="M60 61.500c5-2.200 12-2.200 17 0-4 4-13 4-17 0z" fill="#74453c"/>
<path d="M61 67c5 1.500 10 1.500 15 0" stroke="#8d6a58" stroke-width="1.500" fill="none"/>
<path d="M52 38.500h14M71 38.500h14" stroke="#5b463e" stroke-width="1.700"/>
<path d="M64 53c3 1.500 6 1.500 9 0" stroke="#8a6452" stroke-width="1.600" fill="none"/>
</g>
<path d="M51.500 36.500h15.500v5.500h-15.500zM70.500 36.500h15.500v5.500h-15.500zM67 38h3.500" fill="none" stroke="#6d5a52" stroke-width=".5" opacity=".8"/>
</svg>
<div style="position:absolute;left:0;top:0;width:135px;height:101px;background:rgba(70,40,30,.14)"></div>
<div style="position:absolute;left:0;top:0;width:135px;height:5px;background:rgba(225,205,205,.28)"></div><div style="position:absolute;left:130px;top:5px;width:5px;height:96px;background:rgba(225,205,205,.22)"></div><div style="position:absolute;left:0;top:5px;width:4px;height:96px;background:rgba(225,205,205,.16)"></div>
<div style="position:absolute;left:112px;top:1px;width:22px;height:20px;background:rgba(60,35,28,.45);border-radius:3px"></div>
<svg style="position:absolute;left:116px;top:4.500px" width="14" height="14" viewBox="0 0 14 14"><path d="M1 4.500V1h3.500M9.500 1H13v3.500M13 9.500V13H9.500M4.500 13H1V9.500M1.300 1.300l3.700 3.700M12.700 1.300L9 5M12.700 12.700L9 9M1.300 12.700L5 9" fill="none" stroke="#fff" stroke-width="1"/></svg>
<div style="position:absolute;left:9.800px;top:79.600px;width:113.500px;height:13.800px;border-radius:7px;background:rgba(70,62,62,.6)"></div>
</div>
<span class="t" id="t89" style="left:848.20px;top:656.00px;font-size:12.20px;color:#f2f2f2;font-weight:700;transform:scaleX(0.7814);">Genaro Aguirre Aguilar</span>
<div class="a" style="left:547.6px;top:697.500px;width:42px;height:42px;border-radius:21px;background:#0f70d7;box-shadow:0 2px 5px rgba(0,0,0,.5)"></div>
<div class="a" style="left:851.0px;top:697.500px;width:42px;height:42px;border-radius:21px;background:#0f70d7;box-shadow:0 2px 5px rgba(0,0,0,.5)"></div>
<div class="a" style="left:914.0px;top:697.500px;width:42px;height:42px;border-radius:21px;background:#0f70d7;box-shadow:0 2px 5px rgba(0,0,0,.5)"></div>
<div class="a" style="left:977.0px;top:697.500px;width:42px;height:42px;border-radius:21px;background:#0f70d7;box-shadow:0 2px 5px rgba(0,0,0,.5)"></div>
<svg class="a" style="left:558.600px;top:708.500px" width="20" height="20" viewBox="-10 -10 20 20"><path d="M-7.500 0h15M0 -7.500v15" stroke="#fff" stroke-width="1.500"/></svg>
<svg class="a" style="left:862px;top:707px" width="20" height="24" viewBox="-10 -12 20 24"><rect x="-3" y="-8.800" width="6" height="11.500" rx="3" fill="none" stroke="#fff" stroke-width="1.200"/><path d="M-6.200 -1a6.200 6.200 0 0 0 12.400 0M0 5.400v2.200M-4.500 8h9" fill="none" stroke="#fff" stroke-width="1.200"/></svg>
<svg class="a" style="left:925px;top:708.500px" width="20" height="20" viewBox="-10 -10 20 20"><path d="M-6.600 -5.200c.5-1.300 1.700-2 2.700-1.400l1.300 1.500c.5.800.2 1.500-.4 2.100-.5.500-.5 1 0 1.800 1 1.600 2.400 3 4 4 .8.500 1.300.5 1.800 0 .6-.6 1.300-.9 2.100-.4l1.500 1.300c.6 1-.1 2.200-1.400 2.700-1.300.5-3.300.1-5.500-1.400-2.400-1.700-4.400-3.800-5.600-6-1-1.700-1-3.200-.5-4.200z" fill="none" stroke="#fff" stroke-width="1.200" stroke-linejoin="round"/></svg>
<svg class="a" style="left:987.800px;top:710.800px" width="20" height="14.500" viewBox="0 0 22 16"><rect x="1.500" y="3" width="12" height="10.500" rx=".8" fill="none" stroke="#fff" stroke-width="1.300"/><path d="M13.800 8.200l5.700-3.600v7.400z" fill="none" stroke="#fff" stroke-width="1.300" stroke-linejoin="round"/></svg>
<!-- downloads bar -->
<div class="a" style="left:0;top:751px;width:1280px;height:49px;background:#fff"></div>
<div class="a" style="left:0;top:750px;width:525px;height:1px;background:#b9b9b9"></div>
<svg class="a" style="left:19.0px;top:766.6px" width="17" height="17" viewBox="0 0 17 17"><path d="M4.500 .8h8l3.500 3.500v11.500c0 .3-.2.500-.5.500h-11c-.3 0-.5-.2-.5-.5z" fill="#fff" stroke="#c6c6c6" stroke-width=".8"/><path d="M12.500 .8v3.500H16" fill="#e8e8e8" stroke="#c6c6c6" stroke-width=".7"/><path d="M10 6.200h4M10 8.200h4M10 10.200h4" stroke="#2b5cad" stroke-width=".9"/><rect x="0" y="3.800" width="9.300" height="9" fill="#1f4fae"/><path d="M1.700 5.800l1.300 5 1.600-4.200 1.600 4.200 1.400-5" fill="none" stroke="#fff" stroke-width="1.100"/></svg>
<span class="t" id="t90" style="left:49.50px;top:770.00px;font-size:15.30px;color:#34373b;transform:scaleX(0.9398);">Daniel_Vega.docx</span>
<svg class="a" style="left:200.7px;top:771.3px" width="12" height="8" viewBox="0 0 12 8"><path d="M1 6.800L6 1.800l5 5" fill="none" stroke="#6a6d71" stroke-width="1.500"/></svg>
<svg class="a" style="left:246.0px;top:766.6px" width="17" height="17" viewBox="0 0 17 17"><path d="M4.500 .8h8l3.500 3.500v11.500c0 .3-.2.500-.5.500h-11c-.3 0-.5-.2-.5-.5z" fill="#fff" stroke="#c6c6c6" stroke-width=".8"/><path d="M12.500 .8v3.500H16" fill="#e8e8e8" stroke="#c6c6c6" stroke-width=".7"/><path d="M10 6.200h4M10 8.200h4M10 10.200h4" stroke="#2b5cad" stroke-width=".9"/><rect x="0" y="3.800" width="9.300" height="9" fill="#1f4fae"/><path d="M1.700 5.800l1.300 5 1.600-4.200 1.600 4.200 1.400-5" fill="none" stroke="#fff" stroke-width="1.100"/></svg>
<span class="t" id="t91" style="left:276.20px;top:770.00px;font-size:15.30px;color:#34373b;transform:scaleX(0.9143);">Avance_de_te….docx</span>
<svg class="a" style="left:427.7px;top:771.3px" width="12" height="8" viewBox="0 0 12 8"><path d="M1 6.800L6 1.800l5 5" fill="none" stroke="#6a6d71" stroke-width="1.500"/></svg>
<svg class="a" style="left:473.5px;top:766.6px" width="17" height="17" viewBox="0 0 17 17"><path d="M4.500 .8h8l3.500 3.500v11.500c0 .3-.2.500-.5.500h-11c-.3 0-.5-.2-.5-.5z" fill="#fff" stroke="#c6c6c6" stroke-width=".8"/><path d="M12.500 .8v3.500H16" fill="#e8e8e8" stroke="#c6c6c6" stroke-width=".7"/><path d="M10 6.200h4M10 8.200h4M10 10.200h4" stroke="#2b5cad" stroke-width=".9"/><rect x="0" y="3.800" width="9.300" height="9" fill="#1f4fae"/><path d="M1.700 5.800l1.300 5 1.600-4.200 1.600 4.200 1.400-5" fill="none" stroke="#fff" stroke-width="1.100"/></svg>
<span class="t" id="t92" style="left:503.30px;top:770.00px;font-size:15.30px;color:#34373b;transform:scaleX(0.9192);">la_vida_social….docx</span>
<svg class="a" style="left:655.0px;top:771.3px" width="12" height="8" viewBox="0 0 12 8"><path d="M1 6.800L6 1.800l5 5" fill="none" stroke="#6a6d71" stroke-width="1.500"/></svg>
<div class="a" style="left:230px;top:758px;width:1px;height:36px;background:#d0d0d0"></div>
<div class="a" style="left:457px;top:758px;width:1px;height:36px;background:#d0d0d0"></div>
<div class="a" style="left:684px;top:758px;width:1px;height:36px;background:#d0d0d0"></div>
<div class="a" style="left:1137px;top:759px;width:106.500px;height:32px;border:1px solid #dadce0;border-radius:4px;box-sizing:border-box;background:#fff"></div>
<span class="t" id="t93" style="left:1153.40px;top:768.00px;font-size:13.20px;color:#2d3034;transform:scaleX(1.0050);-webkit-text-stroke:.25px #2d3034;">Mostrar todo</span>
<svg class="a" style="left:1256px;top:769px" width="12" height="12" viewBox="0 0 12 12"><path d="M1.200 1.200l9.600 9.600M10.800 1.200l-9.600 9.600" stroke="#6a6d71" stroke-width="1.700"/></svg>
</body></html>
